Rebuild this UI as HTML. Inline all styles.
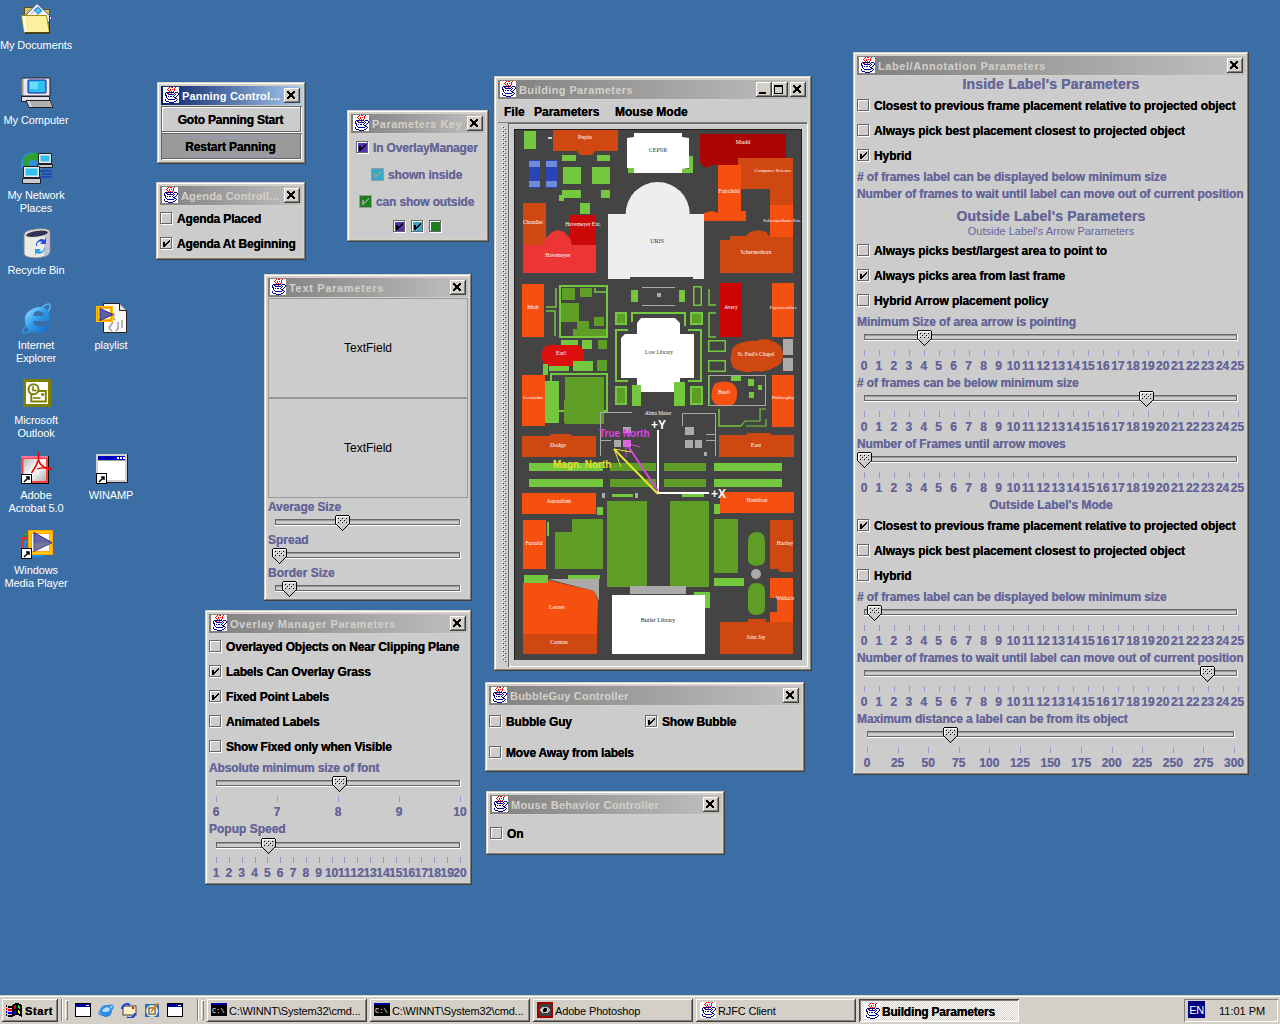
<!DOCTYPE html>
<html><head><meta charset="utf-8"><title>Desktop</title>
<style>
html,body{margin:0;padding:0;width:1280px;height:1024px;overflow:hidden;background:#3A6EA5;font-family:'Liberation Sans', sans-serif}
div{position:absolute;box-sizing:border-box}
svg{display:block}
</style></head><body>
<div style="left:21px;top:2px;width:32px;height:32px"><svg width="32" height="32" viewBox="0 0 32 32">
<path d="M3.5 5.5h8l2 2h15v8h-25z" fill="#D8C860" stroke="#605010" stroke-width="1"/>
<path d="M5 13L16 1.5L31 16L26 22z" fill="#F4F4FF" stroke="#5050A0" stroke-width="1"/>
<path d="M13 8l4-3 4 4-4 3z" fill="#40C8F8" stroke="#2060D0" stroke-width="0.7"/>
<path d="M10 12l8-7M13 15l8-7" stroke="#6060C0" stroke-width="0.6"/>
<path d="M0.5 13.5h25l3 17h-25z" fill="#FFF0A0" stroke="#A09000" stroke-width="1"/>
<path d="M1 14h3l2 16H3z" fill="#FFFFFF" opacity="0.7"/>
<path d="M4 31h25" stroke="#403000" stroke-width="1.5"/>
<path d="M28.5 14v17" stroke="#403000" stroke-width="1"/>
</svg></div><div style="left:-14px;top:39.70px;width:100px;text-align:center;font:normal 11px/11px 'Liberation Sans', sans-serif;color:#fff;white-space:pre;letter-spacing:-0.1px">My Documents</div><div style="left:21px;top:77px;width:32px;height:32px"><svg width="32" height="32" viewBox="0 0 32 32">
<path d="M2 1h26q1 0 1 1v17H1V2q0-1 1-1z" fill="#E8E8F4" stroke="#202020" stroke-width="1"/>
<path d="M1.5 2v16" stroke="#A0A080" stroke-width="2"/>
<rect x="7" y="3" width="18" height="13" rx="1" fill="#30C0F0" stroke="#1010A0" stroke-width="1"/>
<path d="M9 5h8v7H9z" fill="#90F0FF" opacity="0.6"/>
<path d="M0.5 19.5h28v5h-28z" fill="#E0E0EC" stroke="#202020" stroke-width="1"/>
<path d="M5 23.5h24l3 7H8z" fill="#D0D0E0" stroke="#202020" stroke-width="1"/>
<path d="M9 25h19M10 27h19M11 29h19" stroke="#808060" stroke-width="0.8"/>
</svg></div><div style="left:-14px;top:114.70px;width:100px;text-align:center;font:normal 11px/11px 'Liberation Sans', sans-serif;color:#fff;white-space:pre;letter-spacing:-0.1px">My Computer</div><div style="left:21px;top:152px;width:32px;height:32px"><svg width="32" height="32" viewBox="0 0 32 32">
<circle cx="11" cy="11.5" r="11" fill="#3090E0"/>
<path d="M2 7q5-7 13-6l4 4-3 4-6-1-3 3 2 4-4 1q-4-4-3-9z" fill="#30A030"/>
<path d="M13 15l5 2 2 4-3 3-3-3z" fill="#30A030"/>
<path d="M17.5 1.5h13v10h-13z" fill="#E8E8F4" stroke="#202020" stroke-width="1"/>
<path d="M19.5 3.5h9v6h-9z" fill="#30C0F0"/>
<path d="M16.5 12.5h15v3h-15z" fill="#C8C8D4" stroke="#202020" stroke-width="1"/>
<path d="M2.5 14.5h16v11h-16z" fill="#E8E8F4" stroke="#202020" stroke-width="1"/>
<path d="M4.5 16.5h12v7h-12z" fill="#30C0F0"/>
<path d="M1.5 26.5h18v5h-18z" fill="#C8C8D4" stroke="#202020" stroke-width="1"/>
<path d="M19 19h12M21 22h10M19 25h12" stroke="#1840C0" stroke-width="1.6"/>
</svg></div><div style="left:-14px;top:189.70px;width:100px;text-align:center;font:normal 11px/11px 'Liberation Sans', sans-serif;color:#fff;white-space:pre;letter-spacing:-0.1px">My Network</div><div style="left:-14px;top:202.70px;width:100px;text-align:center;font:normal 11px/11px 'Liberation Sans', sans-serif;color:#fff;white-space:pre;letter-spacing:-0.1px">Places</div><div style="left:21px;top:227px;width:32px;height:32px"><svg width="32" height="32" viewBox="0 0 32 32">
<path d="M3 8q0-5 13-6t13 3v20q-2 5-13 6q-12 0-13-4z" fill="#ECECE4" stroke="#808090" stroke-width="1"/>
<path d="M24 6h5v19q-2 5-6 5z" fill="#B8B8D0" opacity="0.8"/>
<ellipse cx="16" cy="6.5" rx="12.5" ry="4" transform="rotate(-8 16 6.5)" fill="#D8D8C0"/>
<ellipse cx="16" cy="6.8" rx="11" ry="2.8" transform="rotate(-8 16 6.8)" fill="#303058"/>
<path d="M15 19a6 6 0 0 1 9-6l1-3v7h-6l2-2a3.5 3.5 0 0 0-5 4z" fill="#2050E8"/>
<path d="M24 21a6 6 0 0 1-9 5l-1 3v-7h6l-2 2a3.5 3.5 0 0 0 5-4z" fill="#20A0F0"/>
</svg></div><div style="left:-14px;top:264.70px;width:100px;text-align:center;font:normal 11px/11px 'Liberation Sans', sans-serif;color:#fff;white-space:pre;letter-spacing:-0.1px">Recycle Bin</div><div style="left:21px;top:302px;width:32px;height:32px"><svg width="32" height="32" viewBox="0 0 32 32">
<defs><linearGradient id="ieg" x1="0" y1="0" x2="1" y2="1"><stop offset="0" stop-color="#A0E8FF"/><stop offset="0.45" stop-color="#30A0F0"/><stop offset="1" stop-color="#1060C0"/></linearGradient></defs>
<path d="M20 6q8-6 9-3t-3 8" fill="none" stroke="#50B0F0" stroke-width="1.6"/>
<path d="M6 22q-6 8-4 9t9-3" fill="none" stroke="#3090E0" stroke-width="1.6"/>
<path d="M17 5q12 0 12 12v2H12q1 6 7 6q5 0 7-3h3q-3 9-11 9q-12 0-14-11t13-15zM12 14h11q-1-5-5.5-5t-5.5 5z" fill="url(#ieg)"/>
</svg></div><div style="left:-14px;top:339.70px;width:100px;text-align:center;font:normal 11px/11px 'Liberation Sans', sans-serif;color:#fff;white-space:pre;letter-spacing:-0.1px">Internet</div><div style="left:-14px;top:352.70px;width:100px;text-align:center;font:normal 11px/11px 'Liberation Sans', sans-serif;color:#fff;white-space:pre;letter-spacing:-0.1px">Explorer</div><div style="left:96px;top:302px;width:32px;height:32px"><svg width="32" height="32" viewBox="0 0 32 32">
<path d="M7.5 1.5h16l7 7v22h-23z" fill="#F8F8F8" stroke="#202020" stroke-width="1"/>
<path d="M23.5 1.5v7h7" fill="#E0E0E0" stroke="#202020" stroke-width="1"/>
<path d="M15 10l3 2-1 4 2 2M22 20v7l-2 2M26 18v8M17 20l-4 6 3 3" stroke="#A0A0A0" stroke-width="1.5" fill="none"/>
<rect x="0" y="4" width="17" height="16" fill="#FFC000"/>
<rect x="1.5" y="5.5" width="14" height="13" fill="none" stroke="#FF9000" stroke-width="1"/>
<rect x="3" y="7" width="11" height="10" fill="#F8F8F8"/>
<path d="M4 6.5l13 6-13 6z" fill="#6060A8" stroke="#2828A0" stroke-width="1"/>
</svg></div><div style="left:61px;top:339.70px;width:100px;text-align:center;font:normal 11px/11px 'Liberation Sans', sans-serif;color:#fff;white-space:pre;letter-spacing:-0.1px">playlist</div><div style="left:21px;top:377px;width:32px;height:32px"><svg width="32" height="32" viewBox="0 0 32 32">
<rect x="2" y="2" width="28" height="28" fill="#808000"/>
<rect x="5" y="5" width="22" height="22" fill="#FFFFFF"/>
<path d="M10.3 14v10.5h14.5V14H18" fill="none" stroke="#808000" stroke-width="2"/>
<circle cx="12.5" cy="12.2" r="5" fill="#fff" stroke="#808000" stroke-width="2"/>
<path d="M12 9.3v4.2h3.6" fill="none" stroke="#808000" stroke-width="1.6"/>
<rect x="20.2" y="16.2" width="2.8" height="2.6" fill="#808000"/>
<path d="M12 21h7.5" stroke="#808000" stroke-width="1.6"/>
</svg></div><div style="left:-14px;top:414.70px;width:100px;text-align:center;font:normal 11px/11px 'Liberation Sans', sans-serif;color:#fff;white-space:pre;letter-spacing:-0.1px">Microsoft</div><div style="left:-14px;top:427.70px;width:100px;text-align:center;font:normal 11px/11px 'Liberation Sans', sans-serif;color:#fff;white-space:pre;letter-spacing:-0.1px">Outlook</div><div style="left:21px;top:452px;width:32px;height:32px"><svg width="32" height="32" viewBox="0 0 32 32">
<defs><linearGradient id="acg" x1="0" y1="0" x2="1" y2="1"><stop offset="0" stop-color="#B8B8B8"/><stop offset="0.5" stop-color="#FFFFFF"/><stop offset="1" stop-color="#B0B0B0"/></linearGradient></defs>
<rect x="0" y="4" width="28" height="28" fill="#000"/>
<rect x="0" y="4" width="27" height="27" fill="#FF4040"/>
<rect x="0" y="4" width="27" height="2" fill="#FF70A0"/>
<rect x="2.5" y="7" width="22.5" height="22" fill="url(#acg)"/>
<path d="M17.5 0v8q-2 6-7 13" fill="none" stroke="#F00000" stroke-width="1.6"/>
<path d="M17.5 8q2 7 10 8.5h4" fill="none" stroke="#F00000" stroke-width="1.6"/>
<path d="M16 17q6-2 12-0.5" fill="none" stroke="#F00000" stroke-width="1.2"/>
<path d="M27 15l4 1.5-4 2z" fill="#E00000"/>
<rect x="0.5" y="22.5" width="10" height="9" fill="#fff" stroke="#000" stroke-width="1"/>
<path d="M3 30l5-5M5 25h3v3" stroke="#000" stroke-width="1.5" fill="none"/>
</svg></div><div style="left:-14px;top:489.70px;width:100px;text-align:center;font:normal 11px/11px 'Liberation Sans', sans-serif;color:#fff;white-space:pre;letter-spacing:-0.1px">Adobe</div><div style="left:-14px;top:502.70px;width:100px;text-align:center;font:normal 11px/11px 'Liberation Sans', sans-serif;color:#fff;white-space:pre;letter-spacing:-0.1px">Acrobat 5.0</div><div style="left:96px;top:452px;width:32px;height:32px"><svg width="32" height="32" viewBox="0 0 32 32" shape-rendering="crispEdges">
<rect x="0" y="2" width="32" height="29" fill="#202020"/>
<rect x="0" y="2" width="31" height="28" fill="#D0D0D0"/>
<rect x="2" y="4" width="27" height="24" fill="#A0A0A0"/>
<rect x="2" y="4" width="27" height="4" fill="#0000C0"/>
<rect x="2" y="9" width="27" height="19" fill="#FFFFFF"/>
<rect x="21" y="5" width="2" height="2" fill="#fff"/><rect x="24" y="5" width="2" height="2" fill="#fff"/><rect x="27" y="5" width="2" height="2" fill="#fff"/>
<rect x="0.5" y="21.5" width="10" height="10" fill="#fff" stroke="#000" stroke-width="1"/>
<path d="M3 30l5-5M5 25h3v3" stroke="#000" stroke-width="1.5" fill="none" shape-rendering="auto"/>
</svg></div><div style="left:61px;top:489.70px;width:100px;text-align:center;font:normal 11px/11px 'Liberation Sans', sans-serif;color:#fff;white-space:pre;letter-spacing:-0.1px">WINAMP</div><div style="left:21px;top:527px;width:32px;height:32px"><svg width="32" height="32" viewBox="0 0 32 32">
<g transform="translate(0,-1)">
<path d="M1 23V12h5" fill="none" stroke="#F03010" stroke-width="2"/>
<path d="M3 10V8h4" fill="none" stroke="#20A020" stroke-width="2"/>
<path d="M4 23V16h3" fill="none" stroke="#1890F0" stroke-width="2"/>
<path d="M11 30h11" fill="none" stroke="#1890F0" stroke-width="2"/>
<rect x="7.5" y="4.5" width="24" height="24" fill="#FFC800" stroke="#FFA000" stroke-width="1"/>
<rect x="10" y="7" width="19" height="19" fill="#FFA020"/>
<rect x="11" y="8" width="17" height="17" fill="#FFFFFF"/>
<path d="M13 6.5L31 16.7L13 25.3z" fill="#6464A8" stroke="#282890" stroke-width="1"/>
<path d="M13 17L31 16.7L13 25.3z" fill="#808090" opacity="0.6"/>
</g>
<rect x="0.5" y="21.5" width="10" height="10" fill="#fff" stroke="#000" stroke-width="1"/>
<path d="M3 30l5-5M5 25h3v3" stroke="#000" stroke-width="1.5" fill="none"/>
</svg></div><div style="left:-14px;top:564.70px;width:100px;text-align:center;font:normal 11px/11px 'Liberation Sans', sans-serif;color:#fff;white-space:pre;letter-spacing:-0.1px">Windows</div><div style="left:-14px;top:577.70px;width:100px;text-align:center;font:normal 11px/11px 'Liberation Sans', sans-serif;color:#fff;white-space:pre;letter-spacing:-0.1px">Media Player</div><div style="left:157px;top:82px;width:149px;height:82px;background:#D4D0C8;box-shadow:inset -1px -1px #404040,inset 1px 1px #D4D0C8,inset -2px -2px #808080,inset 2px 2px #fff;"></div><div style="left:161px;top:86px;width:141px;height:19px;background:linear-gradient(to right,#0A246A,#A6CAF0)"></div><div style="left:163px;top:87px;width:16px;height:16px"><svg width="16" height="16" viewBox="0 0 16 16" shape-rendering="crispEdges"><rect width="16" height="16" fill="#fff"/><path d="M6 0h1v1h-1zM8 0h1v1h-1zM9 0h1v1h-1zM12 0h1v1h-1zM5 1h1v1h-1zM11 1h1v1h-1zM4 2h1v1h-1zM7 2h1v1h-1zM9 2h1v1h-1zM11 2h1v1h-1zM5 3h1v1h-1zM7 3h1v1h-1zM11 3h1v1h-1zM6 4h1v1h-1zM8 4h1v1h-1zM10 4h1v1h-1zM5 6h1v1h-1zM8 6h1v1h-1z" fill="#f00"/><path d="M3 5h1v1h-1zM4 5h1v1h-1zM5 5h1v1h-1zM6 5h1v1h-1zM7 5h1v1h-1zM8 5h1v1h-1zM9 5h1v1h-1zM10 5h1v1h-1zM12 5h1v1h-1zM13 5h1v1h-1zM14 5h1v1h-1zM2 6h1v1h-1zM4 6h1v1h-1zM11 6h1v1h-1zM15 6h1v1h-1zM2 7h1v1h-1zM5 7h1v1h-1zM6 7h1v1h-1zM7 7h1v1h-1zM8 7h1v1h-1zM9 7h1v1h-1zM10 7h1v1h-1zM12 7h1v1h-1zM15 7h1v1h-1zM2 8h1v1h-1zM3 8h1v1h-1zM11 8h1v1h-1zM14 8h1v1h-1zM3 9h1v1h-1zM5 9h1v1h-1zM7 9h1v1h-1zM8 9h1v1h-1zM10 9h1v1h-1zM13 9h1v1h-1zM3 10h1v1h-1zM11 10h1v1h-1zM12 10h1v1h-1zM4 11h1v1h-1zM12 11h1v1h-1zM13 11h1v1h-1zM2 12h1v1h-1zM5 12h1v1h-1zM6 12h1v1h-1zM7 12h1v1h-1zM8 12h1v1h-1zM9 12h1v1h-1zM10 12h1v1h-1zM11 12h1v1h-1zM14 12h1v1h-1zM2 13h1v1h-1zM13 13h1v1h-1zM3 14h1v1h-1zM4 14h1v1h-1zM5 14h1v1h-1zM11 14h1v1h-1zM12 14h1v1h-1zM6 15h1v1h-1zM7 15h1v1h-1zM8 15h1v1h-1zM9 15h1v1h-1zM10 15h1v1h-1z" fill="#00008B"/></svg></div><div style="left:182px;top:90.69px;height:11px;font:bold 11px/11px 'Liberation Sans', sans-serif;color:#fff;white-space:pre;letter-spacing:0.18px">Panning Control...</div><div style="left:284px;top:88px;width:16px;height:15px;background:#D4D0C8;box-shadow:inset -1px -1px #404040,inset 1px 1px #fff,inset -2px -2px #808080;"><svg style="position:absolute;left:3px;top:3px" width="8" height="8" shape-rendering="crispEdges"><path d="M0 0h1v1h-1zM1 0h1v1h-1zM6 0h1v1h-1zM7 0h1v1h-1zM0 1h1v1h-1zM1 1h1v1h-1zM2 1h1v1h-1zM5 1h1v1h-1zM6 1h1v1h-1zM7 1h1v1h-1zM1 2h1v1h-1zM2 2h1v1h-1zM3 2h1v1h-1zM4 2h1v1h-1zM5 2h1v1h-1zM6 2h1v1h-1zM2 3h1v1h-1zM3 3h1v1h-1zM4 3h1v1h-1zM5 3h1v1h-1zM2 4h1v1h-1zM3 4h1v1h-1zM4 4h1v1h-1zM5 4h1v1h-1zM1 5h1v1h-1zM2 5h1v1h-1zM3 5h1v1h-1zM4 5h1v1h-1zM5 5h1v1h-1zM6 5h1v1h-1zM0 6h1v1h-1zM1 6h1v1h-1zM2 6h1v1h-1zM5 6h1v1h-1zM6 6h1v1h-1zM7 6h1v1h-1zM0 7h1v1h-1zM1 7h1v1h-1zM6 7h1v1h-1zM7 7h1v1h-1z" fill="#000"/></svg></div><div style="left:161px;top:106px;width:141px;height:54px;background:#CCCCCC"></div><div style="left:161px;top:106px;width:141px;height:27px;background:#CCCCCC;box-shadow:inset 1px 1px #666,inset -1px -1px #fff,inset -2px -2px #666,inset 2px 2px #fff"></div><div style="left:160px;top:113.84px;width:141px;text-align:center;font:bold 12px/12px 'Liberation Sans', sans-serif;color:#000;white-space:pre;text-shadow:0 0 0.3px;letter-spacing:-0.2px">Goto Panning Start</div><div style="left:161px;top:133px;width:141px;height:27px;background:#999999;box-shadow:inset 1px 1px #666,inset -1px -1px #fff,inset -2px -2px #666"></div><div style="left:185px;top:137px;width:93px;height:19px;box-sizing:border-box;border:1px solid #9999CC"></div><div style="left:160px;top:140.84px;width:141px;text-align:center;font:bold 12px/12px 'Liberation Sans', sans-serif;color:#000;white-space:pre;text-shadow:0 0 0.3px;letter-spacing:-0.1px">Restart Panning</div><div style="left:156px;top:182px;width:150px;height:78px;background:#D4D0C8;box-shadow:inset -1px -1px #404040,inset 1px 1px #D4D0C8,inset -2px -2px #808080,inset 2px 2px #fff;"></div><div style="left:160px;top:186px;width:142px;height:19px;background:linear-gradient(to right,#808080,#C0C0C0)"></div><div style="left:162px;top:187px;width:16px;height:16px"><svg width="16" height="16" viewBox="0 0 16 16" shape-rendering="crispEdges"><rect width="16" height="16" fill="#fff"/><path d="M6 0h1v1h-1zM8 0h1v1h-1zM9 0h1v1h-1zM12 0h1v1h-1zM5 1h1v1h-1zM11 1h1v1h-1zM4 2h1v1h-1zM7 2h1v1h-1zM9 2h1v1h-1zM11 2h1v1h-1zM5 3h1v1h-1zM7 3h1v1h-1zM11 3h1v1h-1zM6 4h1v1h-1zM8 4h1v1h-1zM10 4h1v1h-1zM5 6h1v1h-1zM8 6h1v1h-1z" fill="#f00"/><path d="M3 5h1v1h-1zM4 5h1v1h-1zM5 5h1v1h-1zM6 5h1v1h-1zM7 5h1v1h-1zM8 5h1v1h-1zM9 5h1v1h-1zM10 5h1v1h-1zM12 5h1v1h-1zM13 5h1v1h-1zM14 5h1v1h-1zM2 6h1v1h-1zM4 6h1v1h-1zM11 6h1v1h-1zM15 6h1v1h-1zM2 7h1v1h-1zM5 7h1v1h-1zM6 7h1v1h-1zM7 7h1v1h-1zM8 7h1v1h-1zM9 7h1v1h-1zM10 7h1v1h-1zM12 7h1v1h-1zM15 7h1v1h-1zM2 8h1v1h-1zM3 8h1v1h-1zM11 8h1v1h-1zM14 8h1v1h-1zM3 9h1v1h-1zM5 9h1v1h-1zM7 9h1v1h-1zM8 9h1v1h-1zM10 9h1v1h-1zM13 9h1v1h-1zM3 10h1v1h-1zM11 10h1v1h-1zM12 10h1v1h-1zM4 11h1v1h-1zM12 11h1v1h-1zM13 11h1v1h-1zM2 12h1v1h-1zM5 12h1v1h-1zM6 12h1v1h-1zM7 12h1v1h-1zM8 12h1v1h-1zM9 12h1v1h-1zM10 12h1v1h-1zM11 12h1v1h-1zM14 12h1v1h-1zM2 13h1v1h-1zM13 13h1v1h-1zM3 14h1v1h-1zM4 14h1v1h-1zM5 14h1v1h-1zM11 14h1v1h-1zM12 14h1v1h-1zM6 15h1v1h-1zM7 15h1v1h-1zM8 15h1v1h-1zM9 15h1v1h-1zM10 15h1v1h-1z" fill="#00008B"/></svg></div><div style="left:181px;top:190.69px;height:11px;font:bold 11px/11px 'Liberation Sans', sans-serif;color:#D4D0C8;white-space:pre;letter-spacing:0.18px">Agenda Controll...</div><div style="left:284px;top:188px;width:16px;height:15px;background:#D4D0C8;box-shadow:inset -1px -1px #404040,inset 1px 1px #fff,inset -2px -2px #808080;"><svg style="position:absolute;left:3px;top:3px" width="8" height="8" shape-rendering="crispEdges"><path d="M0 0h1v1h-1zM1 0h1v1h-1zM6 0h1v1h-1zM7 0h1v1h-1zM0 1h1v1h-1zM1 1h1v1h-1zM2 1h1v1h-1zM5 1h1v1h-1zM6 1h1v1h-1zM7 1h1v1h-1zM1 2h1v1h-1zM2 2h1v1h-1zM3 2h1v1h-1zM4 2h1v1h-1zM5 2h1v1h-1zM6 2h1v1h-1zM2 3h1v1h-1zM3 3h1v1h-1zM4 3h1v1h-1zM5 3h1v1h-1zM2 4h1v1h-1zM3 4h1v1h-1zM4 4h1v1h-1zM5 4h1v1h-1zM1 5h1v1h-1zM2 5h1v1h-1zM3 5h1v1h-1zM4 5h1v1h-1zM5 5h1v1h-1zM6 5h1v1h-1zM0 6h1v1h-1zM1 6h1v1h-1zM2 6h1v1h-1zM5 6h1v1h-1zM6 6h1v1h-1zM7 6h1v1h-1zM0 7h1v1h-1zM1 7h1v1h-1zM6 7h1v1h-1zM7 7h1v1h-1z" fill="#000"/></svg></div><div style="left:160px;top:206px;width:142px;height:50px;background:#CCCCCC"></div><div style="left:160px;top:212px;width:13px;height:13px;"><div style="left:1px;top:1px;width:12px;height:12px;border:1px solid #fff"></div><div style="left:0;top:0;width:12px;height:12px;border:1px solid #666"></div></div><div style="left:177px;top:212.84px;font:bold 12px/12px 'Liberation Sans', sans-serif;color:#000;white-space:pre;text-shadow:0 0 0.3px;letter-spacing:-0.15px">Agenda Placed</div><div style="left:160px;top:237px;width:13px;height:13px;"><div style="left:1px;top:1px;width:12px;height:12px;border:1px solid #fff"></div><div style="left:0;top:0;width:12px;height:12px;border:1px solid #666"></div><svg style="position:absolute;left:0;top:0" width="13" height="13" shape-rendering="crispEdges"><path d="M3 5h2v5H3zM9 3h1v2H9zM8 4h1v2H8zM7 5h1v2H7zM6 6h1v2H6zM5 7h1v2H5z" fill="#000"/></svg></div><div style="left:177px;top:237.84px;font:bold 12px/12px 'Liberation Sans', sans-serif;color:#000;white-space:pre;text-shadow:0 0 0.3px;letter-spacing:-0.15px">Agenda At Beginning</div><div style="left:347px;top:110px;width:142px;height:132px;background:#D4D0C8;box-shadow:inset -1px -1px #404040,inset 1px 1px #D4D0C8,inset -2px -2px #808080,inset 2px 2px #fff;"></div><div style="left:351px;top:114px;width:134px;height:19px;background:linear-gradient(to right,#808080,#C0C0C0)"></div><div style="left:353px;top:115px;width:16px;height:16px"><svg width="16" height="16" viewBox="0 0 16 16" shape-rendering="crispEdges"><rect width="16" height="16" fill="#fff"/><path d="M6 0h1v1h-1zM8 0h1v1h-1zM9 0h1v1h-1zM12 0h1v1h-1zM5 1h1v1h-1zM11 1h1v1h-1zM4 2h1v1h-1zM7 2h1v1h-1zM9 2h1v1h-1zM11 2h1v1h-1zM5 3h1v1h-1zM7 3h1v1h-1zM11 3h1v1h-1zM6 4h1v1h-1zM8 4h1v1h-1zM10 4h1v1h-1zM5 6h1v1h-1zM8 6h1v1h-1z" fill="#f00"/><path d="M3 5h1v1h-1zM4 5h1v1h-1zM5 5h1v1h-1zM6 5h1v1h-1zM7 5h1v1h-1zM8 5h1v1h-1zM9 5h1v1h-1zM10 5h1v1h-1zM12 5h1v1h-1zM13 5h1v1h-1zM14 5h1v1h-1zM2 6h1v1h-1zM4 6h1v1h-1zM11 6h1v1h-1zM15 6h1v1h-1zM2 7h1v1h-1zM5 7h1v1h-1zM6 7h1v1h-1zM7 7h1v1h-1zM8 7h1v1h-1zM9 7h1v1h-1zM10 7h1v1h-1zM12 7h1v1h-1zM15 7h1v1h-1zM2 8h1v1h-1zM3 8h1v1h-1zM11 8h1v1h-1zM14 8h1v1h-1zM3 9h1v1h-1zM5 9h1v1h-1zM7 9h1v1h-1zM8 9h1v1h-1zM10 9h1v1h-1zM13 9h1v1h-1zM3 10h1v1h-1zM11 10h1v1h-1zM12 10h1v1h-1zM4 11h1v1h-1zM12 11h1v1h-1zM13 11h1v1h-1zM2 12h1v1h-1zM5 12h1v1h-1zM6 12h1v1h-1zM7 12h1v1h-1zM8 12h1v1h-1zM9 12h1v1h-1zM10 12h1v1h-1zM11 12h1v1h-1zM14 12h1v1h-1zM2 13h1v1h-1zM13 13h1v1h-1zM3 14h1v1h-1zM4 14h1v1h-1zM5 14h1v1h-1zM11 14h1v1h-1zM12 14h1v1h-1zM6 15h1v1h-1zM7 15h1v1h-1zM8 15h1v1h-1zM9 15h1v1h-1zM10 15h1v1h-1z" fill="#00008B"/></svg></div><div style="left:372px;top:118.69px;height:11px;font:bold 11px/11px 'Liberation Sans', sans-serif;color:#D4D0C8;white-space:pre;letter-spacing:0.49px">Parameters Key</div><div style="left:467px;top:116px;width:16px;height:15px;background:#D4D0C8;box-shadow:inset -1px -1px #404040,inset 1px 1px #fff,inset -2px -2px #808080;"><svg style="position:absolute;left:3px;top:3px" width="8" height="8" shape-rendering="crispEdges"><path d="M0 0h1v1h-1zM1 0h1v1h-1zM6 0h1v1h-1zM7 0h1v1h-1zM0 1h1v1h-1zM1 1h1v1h-1zM2 1h1v1h-1zM5 1h1v1h-1zM6 1h1v1h-1zM7 1h1v1h-1zM1 2h1v1h-1zM2 2h1v1h-1zM3 2h1v1h-1zM4 2h1v1h-1zM5 2h1v1h-1zM6 2h1v1h-1zM2 3h1v1h-1zM3 3h1v1h-1zM4 3h1v1h-1zM5 3h1v1h-1zM2 4h1v1h-1zM3 4h1v1h-1zM4 4h1v1h-1zM5 4h1v1h-1zM1 5h1v1h-1zM2 5h1v1h-1zM3 5h1v1h-1zM4 5h1v1h-1zM5 5h1v1h-1zM6 5h1v1h-1zM0 6h1v1h-1zM1 6h1v1h-1zM2 6h1v1h-1zM5 6h1v1h-1zM6 6h1v1h-1zM7 6h1v1h-1zM0 7h1v1h-1zM1 7h1v1h-1zM6 7h1v1h-1zM7 7h1v1h-1z" fill="#000"/></svg></div><div style="left:351px;top:134px;width:134px;height:104px;background:#CCCCCC"></div><div style="left:356px;top:141px;width:13px;height:13px;"><div style="left:1px;top:1px;width:11px;height:11px;background:#5533AA"></div><div style="left:1px;top:1px;width:12px;height:12px;border:1px solid #fff"></div><div style="left:0;top:0;width:12px;height:12px;border:1px solid #666"></div><svg style="position:absolute;left:0;top:0" width="13" height="13" shape-rendering="crispEdges"><path d="M3 5h2v5H3zM9 3h1v2H9zM8 4h1v2H8zM7 5h1v2H7zM6 6h1v2H6zM5 7h1v2H5z" fill="#000"/></svg></div><div style="left:373px;top:141.84px;font:bold 12px/12px 'Liberation Sans', sans-serif;color:#666699;white-space:pre;text-shadow:0 0 0.3px;letter-spacing:-0.15px">In OverlayManager</div><div style="left:371px;top:168px;width:13px;height:13px;"><div style="left:1px;top:1px;width:11px;height:11px;background:#33AACC"></div><div style="left:0;top:0;width:13px;height:13px;border:1px solid #999"></div><svg style="position:absolute;left:0;top:0" width="13" height="13" shape-rendering="crispEdges"><path d="M3 5h2v5H3zM9 3h1v2H9zM8 4h1v2H8zM7 5h1v2H7zM6 6h1v2H6zM5 7h1v2H5z" fill="#999"/></svg></div><div style="left:388px;top:168.84px;font:bold 12px/12px 'Liberation Sans', sans-serif;color:#666699;white-space:pre;text-shadow:0 0 0.3px;letter-spacing:-0.15px">shown inside</div><div style="left:359px;top:195px;width:13px;height:13px;"><div style="left:1px;top:1px;width:11px;height:11px;background:#1E7F1E"></div><div style="left:0;top:0;width:13px;height:13px;border:1px solid #999"></div><svg style="position:absolute;left:0;top:0" width="13" height="13" shape-rendering="crispEdges"><path d="M3 5h2v5H3zM9 3h1v2H9zM8 4h1v2H8zM7 5h1v2H7zM6 6h1v2H6zM5 7h1v2H5z" fill="#999"/></svg></div><div style="left:376px;top:195.84px;font:bold 12px/12px 'Liberation Sans', sans-serif;color:#666699;white-space:pre;text-shadow:0 0 0.3px;letter-spacing:-0.15px">can show outside</div><div style="left:393px;top:220px;width:13px;height:13px;"><div style="left:1px;top:1px;width:11px;height:11px;background:#5533AA"></div><div style="left:1px;top:1px;width:12px;height:12px;border:1px solid #fff"></div><div style="left:0;top:0;width:12px;height:12px;border:1px solid #666"></div><svg style="position:absolute;left:0;top:0" width="13" height="13" shape-rendering="crispEdges"><path d="M3 5h2v5H3zM9 3h1v2H9zM8 4h1v2H8zM7 5h1v2H7zM6 6h1v2H6zM5 7h1v2H5z" fill="#000"/></svg></div><div style="left:411px;top:220px;width:13px;height:13px;"><div style="left:1px;top:1px;width:11px;height:11px;background:#33AACC"></div><div style="left:1px;top:1px;width:12px;height:12px;border:1px solid #fff"></div><div style="left:0;top:0;width:12px;height:12px;border:1px solid #666"></div><svg style="position:absolute;left:0;top:0" width="13" height="13" shape-rendering="crispEdges"><path d="M3 5h2v5H3zM9 3h1v2H9zM8 4h1v2H8zM7 5h1v2H7zM6 6h1v2H6zM5 7h1v2H5z" fill="#000"/></svg></div><div style="left:429px;top:220px;width:13px;height:13px;"><div style="left:1px;top:1px;width:11px;height:11px;background:#1E7F1E"></div><div style="left:1px;top:1px;width:12px;height:12px;border:1px solid #fff"></div><div style="left:0;top:0;width:12px;height:12px;border:1px solid #666"></div></div><div style="left:264px;top:274px;width:208px;height:327px;background:#D4D0C8;box-shadow:inset -1px -1px #404040,inset 1px 1px #D4D0C8,inset -2px -2px #808080,inset 2px 2px #fff;"></div><div style="left:268px;top:278px;width:200px;height:19px;background:linear-gradient(to right,#808080,#C0C0C0)"></div><div style="left:270px;top:279px;width:16px;height:16px"><svg width="16" height="16" viewBox="0 0 16 16" shape-rendering="crispEdges"><rect width="16" height="16" fill="#fff"/><path d="M6 0h1v1h-1zM8 0h1v1h-1zM9 0h1v1h-1zM12 0h1v1h-1zM5 1h1v1h-1zM11 1h1v1h-1zM4 2h1v1h-1zM7 2h1v1h-1zM9 2h1v1h-1zM11 2h1v1h-1zM5 3h1v1h-1zM7 3h1v1h-1zM11 3h1v1h-1zM6 4h1v1h-1zM8 4h1v1h-1zM10 4h1v1h-1zM5 6h1v1h-1zM8 6h1v1h-1z" fill="#f00"/><path d="M3 5h1v1h-1zM4 5h1v1h-1zM5 5h1v1h-1zM6 5h1v1h-1zM7 5h1v1h-1zM8 5h1v1h-1zM9 5h1v1h-1zM10 5h1v1h-1zM12 5h1v1h-1zM13 5h1v1h-1zM14 5h1v1h-1zM2 6h1v1h-1zM4 6h1v1h-1zM11 6h1v1h-1zM15 6h1v1h-1zM2 7h1v1h-1zM5 7h1v1h-1zM6 7h1v1h-1zM7 7h1v1h-1zM8 7h1v1h-1zM9 7h1v1h-1zM10 7h1v1h-1zM12 7h1v1h-1zM15 7h1v1h-1zM2 8h1v1h-1zM3 8h1v1h-1zM11 8h1v1h-1zM14 8h1v1h-1zM3 9h1v1h-1zM5 9h1v1h-1zM7 9h1v1h-1zM8 9h1v1h-1zM10 9h1v1h-1zM13 9h1v1h-1zM3 10h1v1h-1zM11 10h1v1h-1zM12 10h1v1h-1zM4 11h1v1h-1zM12 11h1v1h-1zM13 11h1v1h-1zM2 12h1v1h-1zM5 12h1v1h-1zM6 12h1v1h-1zM7 12h1v1h-1zM8 12h1v1h-1zM9 12h1v1h-1zM10 12h1v1h-1zM11 12h1v1h-1zM14 12h1v1h-1zM2 13h1v1h-1zM13 13h1v1h-1zM3 14h1v1h-1zM4 14h1v1h-1zM5 14h1v1h-1zM11 14h1v1h-1zM12 14h1v1h-1zM6 15h1v1h-1zM7 15h1v1h-1zM8 15h1v1h-1zM9 15h1v1h-1zM10 15h1v1h-1z" fill="#00008B"/></svg></div><div style="left:289px;top:282.69px;height:11px;font:bold 11px/11px 'Liberation Sans', sans-serif;color:#D4D0C8;white-space:pre;letter-spacing:0.68px">Text Parameters</div><div style="left:450px;top:280px;width:16px;height:15px;background:#D4D0C8;box-shadow:inset -1px -1px #404040,inset 1px 1px #fff,inset -2px -2px #808080;"><svg style="position:absolute;left:3px;top:3px" width="8" height="8" shape-rendering="crispEdges"><path d="M0 0h1v1h-1zM1 0h1v1h-1zM6 0h1v1h-1zM7 0h1v1h-1zM0 1h1v1h-1zM1 1h1v1h-1zM2 1h1v1h-1zM5 1h1v1h-1zM6 1h1v1h-1zM7 1h1v1h-1zM1 2h1v1h-1zM2 2h1v1h-1zM3 2h1v1h-1zM4 2h1v1h-1zM5 2h1v1h-1zM6 2h1v1h-1zM2 3h1v1h-1zM3 3h1v1h-1zM4 3h1v1h-1zM5 3h1v1h-1zM2 4h1v1h-1zM3 4h1v1h-1zM4 4h1v1h-1zM5 4h1v1h-1zM1 5h1v1h-1zM2 5h1v1h-1zM3 5h1v1h-1zM4 5h1v1h-1zM5 5h1v1h-1zM6 5h1v1h-1zM0 6h1v1h-1zM1 6h1v1h-1zM2 6h1v1h-1zM5 6h1v1h-1zM6 6h1v1h-1zM7 6h1v1h-1zM0 7h1v1h-1zM1 7h1v1h-1zM6 7h1v1h-1zM7 7h1v1h-1z" fill="#000"/></svg></div><div style="left:268px;top:298px;width:200px;height:299px;background:#CCCCCC"></div><div style="left:268px;top:298px;width:200px;height:101px;box-sizing:border-box;border:1px solid #999;border-bottom:2px solid #999"></div><div style="left:268px;top:341.84px;width:200px;text-align:center;font:normal 12px/12px 'Liberation Sans', sans-serif;color:#000;white-space:pre;">TextField</div><div style="left:268px;top:398px;width:200px;height:100px;box-sizing:border-box;border:1px solid #999"></div><div style="left:268px;top:441.84px;width:200px;text-align:center;font:normal 12px/12px 'Liberation Sans', sans-serif;color:#000;white-space:pre;">TextField</div><div style="left:268px;top:500.84px;font:bold 12px/12px 'Liberation Sans', sans-serif;color:#666699;white-space:pre;text-shadow:0 0 0.3px;letter-spacing:-0.1px">Average Size</div><div style="left:275px;top:519px;width:186px;height:7px;background:#fff"></div><div style="left:275px;top:519px;width:185px;height:6px;background:#CCCCCC;border:1px solid #666;box-shadow:inset 0 1px #999"></div><div style="left:335px;top:515px;width:15px;height:16px"><svg width="15" height="16" shape-rendering="crispEdges"><path d="M1 1h13v8l-7 7l-7-7z" fill="#CCCCCC"/>
<path d="M1 1h13v1H1zM1 1h1v8H1z" fill="#fff"/>
<path d="M1 0h13v1H1zM0 1h1v8H0zM14 1h1v8h-1zM1 9h1v1H1zM2 10h1v1H2zM3 11h1v1H3zM4 12h1v1H4zM5 13h1v1H5zM6 14h1v1H6zM7 15h1v1H7zM13 9h1v1h-1zM12 10h1v1h-1zM11 11h1v1h-1zM10 12h1v1h-1zM9 13h1v1H9zM8 14h1v1H8z" fill="#000"/>
<path d="M2 2h1v1H2zM6 2h1v1H6zM10 2h1v1h-1zM4 4h1v1H4zM8 4h1v1H8zM2 6h1v1H2zM6 6h1v1H6zM10 6h1v1h-1z" fill="#fff"/>
<path d="M3 3h1v1H3zM7 3h1v1H7zM11 3h1v1h-1zM5 5h1v1H5zM9 5h1v1H9zM3 7h1v1H3zM7 7h1v1H7zM11 7h1v1h-1z" fill="#000"/></svg></div><div style="left:268px;top:533.84px;font:bold 12px/12px 'Liberation Sans', sans-serif;color:#666699;white-space:pre;text-shadow:0 0 0.3px;">Spread</div><div style="left:275px;top:552px;width:186px;height:7px;background:#fff"></div><div style="left:275px;top:552px;width:185px;height:6px;background:#CCCCCC;border:1px solid #666;box-shadow:inset 0 1px #999"></div><div style="left:272px;top:548px;width:15px;height:16px"><svg width="15" height="16" shape-rendering="crispEdges"><path d="M1 1h13v8l-7 7l-7-7z" fill="#CCCCCC"/>
<path d="M1 1h13v1H1zM1 1h1v8H1z" fill="#fff"/>
<path d="M1 0h13v1H1zM0 1h1v8H0zM14 1h1v8h-1zM1 9h1v1H1zM2 10h1v1H2zM3 11h1v1H3zM4 12h1v1H4zM5 13h1v1H5zM6 14h1v1H6zM7 15h1v1H7zM13 9h1v1h-1zM12 10h1v1h-1zM11 11h1v1h-1zM10 12h1v1h-1zM9 13h1v1H9zM8 14h1v1H8z" fill="#000"/>
<path d="M2 2h1v1H2zM6 2h1v1H6zM10 2h1v1h-1zM4 4h1v1H4zM8 4h1v1H8zM2 6h1v1H2zM6 6h1v1H6zM10 6h1v1h-1z" fill="#fff"/>
<path d="M3 3h1v1H3zM7 3h1v1H7zM11 3h1v1h-1zM5 5h1v1H5zM9 5h1v1H9zM3 7h1v1H3zM7 7h1v1H7zM11 7h1v1h-1z" fill="#000"/></svg></div><div style="left:268px;top:566.84px;font:bold 12px/12px 'Liberation Sans', sans-serif;color:#666699;white-space:pre;text-shadow:0 0 0.3px;">Border Size</div><div style="left:275px;top:585px;width:186px;height:7px;background:#fff"></div><div style="left:275px;top:585px;width:185px;height:6px;background:#CCCCCC;border:1px solid #666;box-shadow:inset 0 1px #999"></div><div style="left:282px;top:581px;width:15px;height:16px"><svg width="15" height="16" shape-rendering="crispEdges"><path d="M1 1h13v8l-7 7l-7-7z" fill="#CCCCCC"/>
<path d="M1 1h13v1H1zM1 1h1v8H1z" fill="#fff"/>
<path d="M1 0h13v1H1zM0 1h1v8H0zM14 1h1v8h-1zM1 9h1v1H1zM2 10h1v1H2zM3 11h1v1H3zM4 12h1v1H4zM5 13h1v1H5zM6 14h1v1H6zM7 15h1v1H7zM13 9h1v1h-1zM12 10h1v1h-1zM11 11h1v1h-1zM10 12h1v1h-1zM9 13h1v1H9zM8 14h1v1H8z" fill="#000"/>
<path d="M2 2h1v1H2zM6 2h1v1H6zM10 2h1v1h-1zM4 4h1v1H4zM8 4h1v1H8zM2 6h1v1H2zM6 6h1v1H6zM10 6h1v1h-1z" fill="#fff"/>
<path d="M3 3h1v1H3zM7 3h1v1H7zM11 3h1v1h-1zM5 5h1v1H5zM9 5h1v1H9zM3 7h1v1H3zM7 7h1v1H7zM11 7h1v1h-1z" fill="#000"/></svg></div><div style="left:205px;top:610px;width:267px;height:275px;background:#D4D0C8;box-shadow:inset -1px -1px #404040,inset 1px 1px #D4D0C8,inset -2px -2px #808080,inset 2px 2px #fff;"></div><div style="left:209px;top:614px;width:259px;height:19px;background:linear-gradient(to right,#808080,#C0C0C0)"></div><div style="left:211px;top:615px;width:16px;height:16px"><svg width="16" height="16" viewBox="0 0 16 16" shape-rendering="crispEdges"><rect width="16" height="16" fill="#fff"/><path d="M6 0h1v1h-1zM8 0h1v1h-1zM9 0h1v1h-1zM12 0h1v1h-1zM5 1h1v1h-1zM11 1h1v1h-1zM4 2h1v1h-1zM7 2h1v1h-1zM9 2h1v1h-1zM11 2h1v1h-1zM5 3h1v1h-1zM7 3h1v1h-1zM11 3h1v1h-1zM6 4h1v1h-1zM8 4h1v1h-1zM10 4h1v1h-1zM5 6h1v1h-1zM8 6h1v1h-1z" fill="#f00"/><path d="M3 5h1v1h-1zM4 5h1v1h-1zM5 5h1v1h-1zM6 5h1v1h-1zM7 5h1v1h-1zM8 5h1v1h-1zM9 5h1v1h-1zM10 5h1v1h-1zM12 5h1v1h-1zM13 5h1v1h-1zM14 5h1v1h-1zM2 6h1v1h-1zM4 6h1v1h-1zM11 6h1v1h-1zM15 6h1v1h-1zM2 7h1v1h-1zM5 7h1v1h-1zM6 7h1v1h-1zM7 7h1v1h-1zM8 7h1v1h-1zM9 7h1v1h-1zM10 7h1v1h-1zM12 7h1v1h-1zM15 7h1v1h-1zM2 8h1v1h-1zM3 8h1v1h-1zM11 8h1v1h-1zM14 8h1v1h-1zM3 9h1v1h-1zM5 9h1v1h-1zM7 9h1v1h-1zM8 9h1v1h-1zM10 9h1v1h-1zM13 9h1v1h-1zM3 10h1v1h-1zM11 10h1v1h-1zM12 10h1v1h-1zM4 11h1v1h-1zM12 11h1v1h-1zM13 11h1v1h-1zM2 12h1v1h-1zM5 12h1v1h-1zM6 12h1v1h-1zM7 12h1v1h-1zM8 12h1v1h-1zM9 12h1v1h-1zM10 12h1v1h-1zM11 12h1v1h-1zM14 12h1v1h-1zM2 13h1v1h-1zM13 13h1v1h-1zM3 14h1v1h-1zM4 14h1v1h-1zM5 14h1v1h-1zM11 14h1v1h-1zM12 14h1v1h-1zM6 15h1v1h-1zM7 15h1v1h-1zM8 15h1v1h-1zM9 15h1v1h-1zM10 15h1v1h-1z" fill="#00008B"/></svg></div><div style="left:230px;top:618.69px;height:11px;font:bold 11px/11px 'Liberation Sans', sans-serif;color:#D4D0C8;white-space:pre;letter-spacing:0.55px">Overlay Manager Parameters</div><div style="left:450px;top:616px;width:16px;height:15px;background:#D4D0C8;box-shadow:inset -1px -1px #404040,inset 1px 1px #fff,inset -2px -2px #808080;"><svg style="position:absolute;left:3px;top:3px" width="8" height="8" shape-rendering="crispEdges"><path d="M0 0h1v1h-1zM1 0h1v1h-1zM6 0h1v1h-1zM7 0h1v1h-1zM0 1h1v1h-1zM1 1h1v1h-1zM2 1h1v1h-1zM5 1h1v1h-1zM6 1h1v1h-1zM7 1h1v1h-1zM1 2h1v1h-1zM2 2h1v1h-1zM3 2h1v1h-1zM4 2h1v1h-1zM5 2h1v1h-1zM6 2h1v1h-1zM2 3h1v1h-1zM3 3h1v1h-1zM4 3h1v1h-1zM5 3h1v1h-1zM2 4h1v1h-1zM3 4h1v1h-1zM4 4h1v1h-1zM5 4h1v1h-1zM1 5h1v1h-1zM2 5h1v1h-1zM3 5h1v1h-1zM4 5h1v1h-1zM5 5h1v1h-1zM6 5h1v1h-1zM0 6h1v1h-1zM1 6h1v1h-1zM2 6h1v1h-1zM5 6h1v1h-1zM6 6h1v1h-1zM7 6h1v1h-1zM0 7h1v1h-1zM1 7h1v1h-1zM6 7h1v1h-1zM7 7h1v1h-1z" fill="#000"/></svg></div><div style="left:209px;top:634px;width:259px;height:247px;background:#CCCCCC"></div><div style="left:209px;top:640px;width:13px;height:13px;"><div style="left:1px;top:1px;width:12px;height:12px;border:1px solid #fff"></div><div style="left:0;top:0;width:12px;height:12px;border:1px solid #666"></div></div><div style="left:226px;top:640.84px;font:bold 12px/12px 'Liberation Sans', sans-serif;color:#000;white-space:pre;text-shadow:0 0 0.3px;letter-spacing:-0.17px">Overlayed Objects on Near Clipping Plane</div><div style="left:209px;top:665px;width:13px;height:13px;"><div style="left:1px;top:1px;width:12px;height:12px;border:1px solid #fff"></div><div style="left:0;top:0;width:12px;height:12px;border:1px solid #666"></div><svg style="position:absolute;left:0;top:0" width="13" height="13" shape-rendering="crispEdges"><path d="M3 5h2v5H3zM9 3h1v2H9zM8 4h1v2H8zM7 5h1v2H7zM6 6h1v2H6zM5 7h1v2H5z" fill="#000"/></svg></div><div style="left:226px;top:665.84px;font:bold 12px/12px 'Liberation Sans', sans-serif;color:#000;white-space:pre;text-shadow:0 0 0.3px;letter-spacing:-0.17px">Labels Can Overlay Grass</div><div style="left:209px;top:690px;width:13px;height:13px;"><div style="left:1px;top:1px;width:12px;height:12px;border:1px solid #fff"></div><div style="left:0;top:0;width:12px;height:12px;border:1px solid #666"></div><svg style="position:absolute;left:0;top:0" width="13" height="13" shape-rendering="crispEdges"><path d="M3 5h2v5H3zM9 3h1v2H9zM8 4h1v2H8zM7 5h1v2H7zM6 6h1v2H6zM5 7h1v2H5z" fill="#000"/></svg></div><div style="left:226px;top:690.84px;font:bold 12px/12px 'Liberation Sans', sans-serif;color:#000;white-space:pre;text-shadow:0 0 0.3px;letter-spacing:-0.17px">Fixed Point Labels</div><div style="left:209px;top:715px;width:13px;height:13px;"><div style="left:1px;top:1px;width:12px;height:12px;border:1px solid #fff"></div><div style="left:0;top:0;width:12px;height:12px;border:1px solid #666"></div></div><div style="left:226px;top:715.84px;font:bold 12px/12px 'Liberation Sans', sans-serif;color:#000;white-space:pre;text-shadow:0 0 0.3px;letter-spacing:-0.17px">Animated Labels</div><div style="left:209px;top:740px;width:13px;height:13px;"><div style="left:1px;top:1px;width:12px;height:12px;border:1px solid #fff"></div><div style="left:0;top:0;width:12px;height:12px;border:1px solid #666"></div></div><div style="left:226px;top:740.84px;font:bold 12px/12px 'Liberation Sans', sans-serif;color:#000;white-space:pre;text-shadow:0 0 0.3px;letter-spacing:-0.17px">Show Fixed only when Visible</div><div style="left:209px;top:761.84px;font:bold 12px/12px 'Liberation Sans', sans-serif;color:#666699;white-space:pre;text-shadow:0 0 0.3px;letter-spacing:-0.15px">Absolute minimum size of font</div><div style="left:216px;top:780px;width:245px;height:7px;background:#fff"></div><div style="left:216px;top:780px;width:244px;height:6px;background:#CCCCCC;border:1px solid #666;box-shadow:inset 0 1px #999"></div><div style="left:332px;top:776px;width:15px;height:16px"><svg width="15" height="16" shape-rendering="crispEdges"><path d="M1 1h13v8l-7 7l-7-7z" fill="#CCCCCC"/>
<path d="M1 1h13v1H1zM1 1h1v8H1z" fill="#fff"/>
<path d="M1 0h13v1H1zM0 1h1v8H0zM14 1h1v8h-1zM1 9h1v1H1zM2 10h1v1H2zM3 11h1v1H3zM4 12h1v1H4zM5 13h1v1H5zM6 14h1v1H6zM7 15h1v1H7zM13 9h1v1h-1zM12 10h1v1h-1zM11 11h1v1h-1zM10 12h1v1h-1zM9 13h1v1H9zM8 14h1v1H8z" fill="#000"/>
<path d="M2 2h1v1H2zM6 2h1v1H6zM10 2h1v1h-1zM4 4h1v1H4zM8 4h1v1H8zM2 6h1v1H2zM6 6h1v1H6zM10 6h1v1h-1z" fill="#fff"/>
<path d="M3 3h1v1H3zM7 3h1v1H7zM11 3h1v1h-1zM5 5h1v1H5zM9 5h1v1H9zM3 7h1v1H3zM7 7h1v1H7zM11 7h1v1h-1z" fill="#000"/></svg></div><div style="left:216px;top:796px;width:1px;height:6px;background:#9999CC"></div><div style="left:277px;top:796px;width:1px;height:6px;background:#9999CC"></div><div style="left:338px;top:796px;width:1px;height:6px;background:#9999CC"></div><div style="left:399px;top:796px;width:1px;height:6px;background:#9999CC"></div><div style="left:460px;top:796px;width:1px;height:6px;background:#9999CC"></div><div style="left:196.0px;top:805.84px;width:40px;text-align:center;font:bold 12px/12px 'Liberation Sans', sans-serif;color:#666699;white-space:pre;text-shadow:0 0 0.3px">6</div><div style="left:257.0px;top:805.84px;width:40px;text-align:center;font:bold 12px/12px 'Liberation Sans', sans-serif;color:#666699;white-space:pre;text-shadow:0 0 0.3px">7</div><div style="left:318.0px;top:805.84px;width:40px;text-align:center;font:bold 12px/12px 'Liberation Sans', sans-serif;color:#666699;white-space:pre;text-shadow:0 0 0.3px">8</div><div style="left:379.0px;top:805.84px;width:40px;text-align:center;font:bold 12px/12px 'Liberation Sans', sans-serif;color:#666699;white-space:pre;text-shadow:0 0 0.3px">9</div><div style="left:440.0px;top:805.84px;width:40px;text-align:center;font:bold 12px/12px 'Liberation Sans', sans-serif;color:#666699;white-space:pre;text-shadow:0 0 0.3px">10</div><div style="left:209px;top:822.84px;font:bold 12px/12px 'Liberation Sans', sans-serif;color:#666699;white-space:pre;text-shadow:0 0 0.3px;">Popup Speed</div><div style="left:216px;top:842px;width:245px;height:7px;background:#fff"></div><div style="left:216px;top:842px;width:244px;height:6px;background:#CCCCCC;border:1px solid #666;box-shadow:inset 0 1px #999"></div><div style="left:261px;top:838px;width:15px;height:16px"><svg width="15" height="16" shape-rendering="crispEdges"><path d="M1 1h13v8l-7 7l-7-7z" fill="#CCCCCC"/>
<path d="M1 1h13v1H1zM1 1h1v8H1z" fill="#fff"/>
<path d="M1 0h13v1H1zM0 1h1v8H0zM14 1h1v8h-1zM1 9h1v1H1zM2 10h1v1H2zM3 11h1v1H3zM4 12h1v1H4zM5 13h1v1H5zM6 14h1v1H6zM7 15h1v1H7zM13 9h1v1h-1zM12 10h1v1h-1zM11 11h1v1h-1zM10 12h1v1h-1zM9 13h1v1H9zM8 14h1v1H8z" fill="#000"/>
<path d="M2 2h1v1H2zM6 2h1v1H6zM10 2h1v1h-1zM4 4h1v1H4zM8 4h1v1H8zM2 6h1v1H2zM6 6h1v1H6zM10 6h1v1h-1z" fill="#fff"/>
<path d="M3 3h1v1H3zM7 3h1v1H7zM11 3h1v1h-1zM5 5h1v1H5zM9 5h1v1H9zM3 7h1v1H3zM7 7h1v1H7zM11 7h1v1h-1z" fill="#000"/></svg></div><div style="left:216px;top:857px;width:1px;height:6px;background:#9999CC"></div><div style="left:229px;top:857px;width:1px;height:6px;background:#9999CC"></div><div style="left:242px;top:857px;width:1px;height:6px;background:#9999CC"></div><div style="left:255px;top:857px;width:1px;height:6px;background:#9999CC"></div><div style="left:267px;top:857px;width:1px;height:6px;background:#9999CC"></div><div style="left:280px;top:857px;width:1px;height:6px;background:#9999CC"></div><div style="left:293px;top:857px;width:1px;height:6px;background:#9999CC"></div><div style="left:306px;top:857px;width:1px;height:6px;background:#9999CC"></div><div style="left:319px;top:857px;width:1px;height:6px;background:#9999CC"></div><div style="left:332px;top:857px;width:1px;height:6px;background:#9999CC"></div><div style="left:344px;top:857px;width:1px;height:6px;background:#9999CC"></div><div style="left:357px;top:857px;width:1px;height:6px;background:#9999CC"></div><div style="left:370px;top:857px;width:1px;height:6px;background:#9999CC"></div><div style="left:383px;top:857px;width:1px;height:6px;background:#9999CC"></div><div style="left:396px;top:857px;width:1px;height:6px;background:#9999CC"></div><div style="left:409px;top:857px;width:1px;height:6px;background:#9999CC"></div><div style="left:421px;top:857px;width:1px;height:6px;background:#9999CC"></div><div style="left:434px;top:857px;width:1px;height:6px;background:#9999CC"></div><div style="left:447px;top:857px;width:1px;height:6px;background:#9999CC"></div><div style="left:460px;top:857px;width:1px;height:6px;background:#9999CC"></div><div style="left:196.0px;top:866.84px;width:40px;text-align:center;font:bold 12px/12px 'Liberation Sans', sans-serif;color:#666699;white-space:pre;text-shadow:0 0 0.3px">1</div><div style="left:208.8px;top:866.84px;width:40px;text-align:center;font:bold 12px/12px 'Liberation Sans', sans-serif;color:#666699;white-space:pre;text-shadow:0 0 0.3px">2</div><div style="left:221.7px;top:866.84px;width:40px;text-align:center;font:bold 12px/12px 'Liberation Sans', sans-serif;color:#666699;white-space:pre;text-shadow:0 0 0.3px">3</div><div style="left:234.5px;top:866.84px;width:40px;text-align:center;font:bold 12px/12px 'Liberation Sans', sans-serif;color:#666699;white-space:pre;text-shadow:0 0 0.3px">4</div><div style="left:247.4px;top:866.84px;width:40px;text-align:center;font:bold 12px/12px 'Liberation Sans', sans-serif;color:#666699;white-space:pre;text-shadow:0 0 0.3px">5</div><div style="left:260.2px;top:866.84px;width:40px;text-align:center;font:bold 12px/12px 'Liberation Sans', sans-serif;color:#666699;white-space:pre;text-shadow:0 0 0.3px">6</div><div style="left:273.1px;top:866.84px;width:40px;text-align:center;font:bold 12px/12px 'Liberation Sans', sans-serif;color:#666699;white-space:pre;text-shadow:0 0 0.3px">7</div><div style="left:285.9px;top:866.84px;width:40px;text-align:center;font:bold 12px/12px 'Liberation Sans', sans-serif;color:#666699;white-space:pre;text-shadow:0 0 0.3px">8</div><div style="left:298.7px;top:866.84px;width:40px;text-align:center;font:bold 12px/12px 'Liberation Sans', sans-serif;color:#666699;white-space:pre;text-shadow:0 0 0.3px">9</div><div style="left:311.6px;top:866.84px;width:40px;text-align:center;font:bold 12px/12px 'Liberation Sans', sans-serif;color:#666699;white-space:pre;text-shadow:0 0 0.3px">10</div><div style="left:324.4px;top:866.84px;width:40px;text-align:center;font:bold 12px/12px 'Liberation Sans', sans-serif;color:#666699;white-space:pre;text-shadow:0 0 0.3px">11</div><div style="left:337.3px;top:866.84px;width:40px;text-align:center;font:bold 12px/12px 'Liberation Sans', sans-serif;color:#666699;white-space:pre;text-shadow:0 0 0.3px">12</div><div style="left:350.1px;top:866.84px;width:40px;text-align:center;font:bold 12px/12px 'Liberation Sans', sans-serif;color:#666699;white-space:pre;text-shadow:0 0 0.3px">13</div><div style="left:362.9px;top:866.84px;width:40px;text-align:center;font:bold 12px/12px 'Liberation Sans', sans-serif;color:#666699;white-space:pre;text-shadow:0 0 0.3px">14</div><div style="left:375.8px;top:866.84px;width:40px;text-align:center;font:bold 12px/12px 'Liberation Sans', sans-serif;color:#666699;white-space:pre;text-shadow:0 0 0.3px">15</div><div style="left:388.6px;top:866.84px;width:40px;text-align:center;font:bold 12px/12px 'Liberation Sans', sans-serif;color:#666699;white-space:pre;text-shadow:0 0 0.3px">16</div><div style="left:401.5px;top:866.84px;width:40px;text-align:center;font:bold 12px/12px 'Liberation Sans', sans-serif;color:#666699;white-space:pre;text-shadow:0 0 0.3px">17</div><div style="left:414.3px;top:866.84px;width:40px;text-align:center;font:bold 12px/12px 'Liberation Sans', sans-serif;color:#666699;white-space:pre;text-shadow:0 0 0.3px">18</div><div style="left:427.2px;top:866.84px;width:40px;text-align:center;font:bold 12px/12px 'Liberation Sans', sans-serif;color:#666699;white-space:pre;text-shadow:0 0 0.3px">19</div><div style="left:440.0px;top:866.84px;width:40px;text-align:center;font:bold 12px/12px 'Liberation Sans', sans-serif;color:#666699;white-space:pre;text-shadow:0 0 0.3px">20</div><div style="left:494px;top:76px;width:318px;height:595px;background:#D4D0C8;box-shadow:inset -1px -1px #404040,inset 1px 1px #D4D0C8,inset -2px -2px #808080,inset 2px 2px #fff;"></div><div style="left:498px;top:80px;width:310px;height:19px;background:linear-gradient(to right,#808080,#C0C0C0)"></div><div style="left:500px;top:81px;width:16px;height:16px"><svg width="16" height="16" viewBox="0 0 16 16" shape-rendering="crispEdges"><rect width="16" height="16" fill="#fff"/><path d="M6 0h1v1h-1zM8 0h1v1h-1zM9 0h1v1h-1zM12 0h1v1h-1zM5 1h1v1h-1zM11 1h1v1h-1zM4 2h1v1h-1zM7 2h1v1h-1zM9 2h1v1h-1zM11 2h1v1h-1zM5 3h1v1h-1zM7 3h1v1h-1zM11 3h1v1h-1zM6 4h1v1h-1zM8 4h1v1h-1zM10 4h1v1h-1zM5 6h1v1h-1zM8 6h1v1h-1z" fill="#f00"/><path d="M3 5h1v1h-1zM4 5h1v1h-1zM5 5h1v1h-1zM6 5h1v1h-1zM7 5h1v1h-1zM8 5h1v1h-1zM9 5h1v1h-1zM10 5h1v1h-1zM12 5h1v1h-1zM13 5h1v1h-1zM14 5h1v1h-1zM2 6h1v1h-1zM4 6h1v1h-1zM11 6h1v1h-1zM15 6h1v1h-1zM2 7h1v1h-1zM5 7h1v1h-1zM6 7h1v1h-1zM7 7h1v1h-1zM8 7h1v1h-1zM9 7h1v1h-1zM10 7h1v1h-1zM12 7h1v1h-1zM15 7h1v1h-1zM2 8h1v1h-1zM3 8h1v1h-1zM11 8h1v1h-1zM14 8h1v1h-1zM3 9h1v1h-1zM5 9h1v1h-1zM7 9h1v1h-1zM8 9h1v1h-1zM10 9h1v1h-1zM13 9h1v1h-1zM3 10h1v1h-1zM11 10h1v1h-1zM12 10h1v1h-1zM4 11h1v1h-1zM12 11h1v1h-1zM13 11h1v1h-1zM2 12h1v1h-1zM5 12h1v1h-1zM6 12h1v1h-1zM7 12h1v1h-1zM8 12h1v1h-1zM9 12h1v1h-1zM10 12h1v1h-1zM11 12h1v1h-1zM14 12h1v1h-1zM2 13h1v1h-1zM13 13h1v1h-1zM3 14h1v1h-1zM4 14h1v1h-1zM5 14h1v1h-1zM11 14h1v1h-1zM12 14h1v1h-1zM6 15h1v1h-1zM7 15h1v1h-1zM8 15h1v1h-1zM9 15h1v1h-1zM10 15h1v1h-1z" fill="#00008B"/></svg></div><div style="left:519px;top:84.69px;height:11px;font:bold 11px/11px 'Liberation Sans', sans-serif;color:#D4D0C8;white-space:pre;letter-spacing:0.37px">Building Parameters</div><div style="left:790px;top:82px;width:16px;height:15px;background:#D4D0C8;box-shadow:inset -1px -1px #404040,inset 1px 1px #fff,inset -2px -2px #808080;"><svg style="position:absolute;left:3px;top:3px" width="8" height="8" shape-rendering="crispEdges"><path d="M0 0h1v1h-1zM1 0h1v1h-1zM6 0h1v1h-1zM7 0h1v1h-1zM0 1h1v1h-1zM1 1h1v1h-1zM2 1h1v1h-1zM5 1h1v1h-1zM6 1h1v1h-1zM7 1h1v1h-1zM1 2h1v1h-1zM2 2h1v1h-1zM3 2h1v1h-1zM4 2h1v1h-1zM5 2h1v1h-1zM6 2h1v1h-1zM2 3h1v1h-1zM3 3h1v1h-1zM4 3h1v1h-1zM5 3h1v1h-1zM2 4h1v1h-1zM3 4h1v1h-1zM4 4h1v1h-1zM5 4h1v1h-1zM1 5h1v1h-1zM2 5h1v1h-1zM3 5h1v1h-1zM4 5h1v1h-1zM5 5h1v1h-1zM6 5h1v1h-1zM0 6h1v1h-1zM1 6h1v1h-1zM2 6h1v1h-1zM5 6h1v1h-1zM6 6h1v1h-1zM7 6h1v1h-1zM0 7h1v1h-1zM1 7h1v1h-1zM6 7h1v1h-1zM7 7h1v1h-1z" fill="#000"/></svg></div><div style="left:772px;top:82px;width:16px;height:15px;background:#D4D0C8;box-shadow:inset -1px -1px #404040,inset 1px 1px #fff,inset -2px -2px #808080;"><div style="left:2px;top:3px;width:9px;height:9px;border:1px solid #000;border-top-width:2px"></div></div><div style="left:756px;top:82px;width:16px;height:15px;background:#D4D0C8;box-shadow:inset -1px -1px #404040,inset 1px 1px #fff,inset -2px -2px #808080;"><div style="left:3px;top:10px;width:7px;height:2px;background:#000"></div></div><div style="left:498px;top:100px;width:310px;height:567px;background:#CCCCCC"></div><div style="left:504px;top:105.84px;font:bold 12px/12px 'Liberation Sans', sans-serif;color:#000;white-space:pre;text-shadow:0 0 0.3px;">File</div><div style="left:534px;top:105.84px;font:bold 12px/12px 'Liberation Sans', sans-serif;color:#000;white-space:pre;text-shadow:0 0 0.3px;">Parameters</div><div style="left:615px;top:105.84px;font:bold 12px/12px 'Liberation Sans', sans-serif;color:#000;white-space:pre;text-shadow:0 0 0.3px;">Mouse Mode</div><div style="left:498px;top:122px;width:309px;height:1px;background:#808080"></div><div style="left:500px;top:126px;width:8px;height:536px"><svg width="8" height="536" shape-rendering="crispEdges"><path d="M2 0h1v1H2zM4 2h1v1H4zM2 4h1v1H2zM4 6h1v1H4zM2 8h1v1H2zM4 10h1v1H4zM2 12h1v1H2zM4 14h1v1H4zM2 16h1v1H2zM4 18h1v1H4zM2 20h1v1H2zM4 22h1v1H4zM2 24h1v1H2zM4 26h1v1H4zM2 28h1v1H2zM4 30h1v1H4zM2 32h1v1H2zM4 34h1v1H4zM2 36h1v1H2zM4 38h1v1H4zM2 40h1v1H2zM4 42h1v1H4zM2 44h1v1H2zM4 46h1v1H4zM2 48h1v1H2zM4 50h1v1H4zM2 52h1v1H2zM4 54h1v1H4zM2 56h1v1H2zM4 58h1v1H4zM2 60h1v1H2zM4 62h1v1H4zM2 64h1v1H2zM4 66h1v1H4zM2 68h1v1H2zM4 70h1v1H4zM2 72h1v1H2zM4 74h1v1H4zM2 76h1v1H2zM4 78h1v1H4zM2 80h1v1H2zM4 82h1v1H4zM2 84h1v1H2zM4 86h1v1H4zM2 88h1v1H2zM4 90h1v1H4zM2 92h1v1H2zM4 94h1v1H4zM2 96h1v1H2zM4 98h1v1H4zM2 100h1v1H2zM4 102h1v1H4zM2 104h1v1H2zM4 106h1v1H4zM2 108h1v1H2zM4 110h1v1H4zM2 112h1v1H2zM4 114h1v1H4zM2 116h1v1H2zM4 118h1v1H4zM2 120h1v1H2zM4 122h1v1H4zM2 124h1v1H2zM4 126h1v1H4zM2 128h1v1H2zM4 130h1v1H4zM2 132h1v1H2zM4 134h1v1H4zM2 136h1v1H2zM4 138h1v1H4zM2 140h1v1H2zM4 142h1v1H4zM2 144h1v1H2zM4 146h1v1H4zM2 148h1v1H2zM4 150h1v1H4zM2 152h1v1H2zM4 154h1v1H4zM2 156h1v1H2zM4 158h1v1H4zM2 160h1v1H2zM4 162h1v1H4zM2 164h1v1H2zM4 166h1v1H4zM2 168h1v1H2zM4 170h1v1H4zM2 172h1v1H2zM4 174h1v1H4zM2 176h1v1H2zM4 178h1v1H4zM2 180h1v1H2zM4 182h1v1H4zM2 184h1v1H2zM4 186h1v1H4zM2 188h1v1H2zM4 190h1v1H4zM2 192h1v1H2zM4 194h1v1H4zM2 196h1v1H2zM4 198h1v1H4zM2 200h1v1H2zM4 202h1v1H4zM2 204h1v1H2zM4 206h1v1H4zM2 208h1v1H2zM4 210h1v1H4zM2 212h1v1H2zM4 214h1v1H4zM2 216h1v1H2zM4 218h1v1H4zM2 220h1v1H2zM4 222h1v1H4zM2 224h1v1H2zM4 226h1v1H4zM2 228h1v1H2zM4 230h1v1H4zM2 232h1v1H2zM4 234h1v1H4zM2 236h1v1H2zM4 238h1v1H4zM2 240h1v1H2zM4 242h1v1H4zM2 244h1v1H2zM4 246h1v1H4zM2 248h1v1H2zM4 250h1v1H4zM2 252h1v1H2zM4 254h1v1H4zM2 256h1v1H2zM4 258h1v1H4zM2 260h1v1H2zM4 262h1v1H4zM2 264h1v1H2zM4 266h1v1H4zM2 268h1v1H2zM4 270h1v1H4zM2 272h1v1H2zM4 274h1v1H4zM2 276h1v1H2zM4 278h1v1H4zM2 280h1v1H2zM4 282h1v1H4zM2 284h1v1H2zM4 286h1v1H4zM2 288h1v1H2zM4 290h1v1H4zM2 292h1v1H2zM4 294h1v1H4zM2 296h1v1H2zM4 298h1v1H4zM2 300h1v1H2zM4 302h1v1H4zM2 304h1v1H2zM4 306h1v1H4zM2 308h1v1H2zM4 310h1v1H4zM2 312h1v1H2zM4 314h1v1H4zM2 316h1v1H2zM4 318h1v1H4zM2 320h1v1H2zM4 322h1v1H4zM2 324h1v1H2zM4 326h1v1H4zM2 328h1v1H2zM4 330h1v1H4zM2 332h1v1H2zM4 334h1v1H4zM2 336h1v1H2zM4 338h1v1H4zM2 340h1v1H2zM4 342h1v1H4zM2 344h1v1H2zM4 346h1v1H4zM2 348h1v1H2zM4 350h1v1H4zM2 352h1v1H2zM4 354h1v1H4zM2 356h1v1H2zM4 358h1v1H4zM2 360h1v1H2zM4 362h1v1H4zM2 364h1v1H2zM4 366h1v1H4zM2 368h1v1H2zM4 370h1v1H4zM2 372h1v1H2zM4 374h1v1H4zM2 376h1v1H2zM4 378h1v1H4zM2 380h1v1H2zM4 382h1v1H4zM2 384h1v1H2zM4 386h1v1H4zM2 388h1v1H2zM4 390h1v1H4zM2 392h1v1H2zM4 394h1v1H4zM2 396h1v1H2zM4 398h1v1H4zM2 400h1v1H2zM4 402h1v1H4zM2 404h1v1H2zM4 406h1v1H4zM2 408h1v1H2zM4 410h1v1H4zM2 412h1v1H2zM4 414h1v1H4zM2 416h1v1H2zM4 418h1v1H4zM2 420h1v1H2zM4 422h1v1H4zM2 424h1v1H2zM4 426h1v1H4zM2 428h1v1H2zM4 430h1v1H4zM2 432h1v1H2zM4 434h1v1H4zM2 436h1v1H2zM4 438h1v1H4zM2 440h1v1H2zM4 442h1v1H4zM2 444h1v1H2zM4 446h1v1H4zM2 448h1v1H2zM4 450h1v1H4zM2 452h1v1H2zM4 454h1v1H4zM2 456h1v1H2zM4 458h1v1H4zM2 460h1v1H2zM4 462h1v1H4zM2 464h1v1H2zM4 466h1v1H4zM2 468h1v1H2zM4 470h1v1H4zM2 472h1v1H2zM4 474h1v1H4zM2 476h1v1H2zM4 478h1v1H4zM2 480h1v1H2zM4 482h1v1H4zM2 484h1v1H2zM4 486h1v1H4zM2 488h1v1H2zM4 490h1v1H4zM2 492h1v1H2zM4 494h1v1H4zM2 496h1v1H2zM4 498h1v1H4zM2 500h1v1H2zM4 502h1v1H4zM2 504h1v1H2zM4 506h1v1H4zM2 508h1v1H2zM4 510h1v1H4zM2 512h1v1H2zM4 514h1v1H4zM2 516h1v1H2zM4 518h1v1H4zM2 520h1v1H2zM4 522h1v1H4zM2 524h1v1H2zM4 526h1v1H4zM2 528h1v1H2zM4 530h1v1H4zM2 532h1v1H2zM4 534h1v1H4z" fill="#fff"/><path d="M3 1h1v1H3zM5 3h1v1H5zM3 5h1v1H3zM5 7h1v1H5zM3 9h1v1H3zM5 11h1v1H5zM3 13h1v1H3zM5 15h1v1H5zM3 17h1v1H3zM5 19h1v1H5zM3 21h1v1H3zM5 23h1v1H5zM3 25h1v1H3zM5 27h1v1H5zM3 29h1v1H3zM5 31h1v1H5zM3 33h1v1H3zM5 35h1v1H5zM3 37h1v1H3zM5 39h1v1H5zM3 41h1v1H3zM5 43h1v1H5zM3 45h1v1H3zM5 47h1v1H5zM3 49h1v1H3zM5 51h1v1H5zM3 53h1v1H3zM5 55h1v1H5zM3 57h1v1H3zM5 59h1v1H5zM3 61h1v1H3zM5 63h1v1H5zM3 65h1v1H3zM5 67h1v1H5zM3 69h1v1H3zM5 71h1v1H5zM3 73h1v1H3zM5 75h1v1H5zM3 77h1v1H3zM5 79h1v1H5zM3 81h1v1H3zM5 83h1v1H5zM3 85h1v1H3zM5 87h1v1H5zM3 89h1v1H3zM5 91h1v1H5zM3 93h1v1H3zM5 95h1v1H5zM3 97h1v1H3zM5 99h1v1H5zM3 101h1v1H3zM5 103h1v1H5zM3 105h1v1H3zM5 107h1v1H5zM3 109h1v1H3zM5 111h1v1H5zM3 113h1v1H3zM5 115h1v1H5zM3 117h1v1H3zM5 119h1v1H5zM3 121h1v1H3zM5 123h1v1H5zM3 125h1v1H3zM5 127h1v1H5zM3 129h1v1H3zM5 131h1v1H5zM3 133h1v1H3zM5 135h1v1H5zM3 137h1v1H3zM5 139h1v1H5zM3 141h1v1H3zM5 143h1v1H5zM3 145h1v1H3zM5 147h1v1H5zM3 149h1v1H3zM5 151h1v1H5zM3 153h1v1H3zM5 155h1v1H5zM3 157h1v1H3zM5 159h1v1H5zM3 161h1v1H3zM5 163h1v1H5zM3 165h1v1H3zM5 167h1v1H5zM3 169h1v1H3zM5 171h1v1H5zM3 173h1v1H3zM5 175h1v1H5zM3 177h1v1H3zM5 179h1v1H5zM3 181h1v1H3zM5 183h1v1H5zM3 185h1v1H3zM5 187h1v1H5zM3 189h1v1H3zM5 191h1v1H5zM3 193h1v1H3zM5 195h1v1H5zM3 197h1v1H3zM5 199h1v1H5zM3 201h1v1H3zM5 203h1v1H5zM3 205h1v1H3zM5 207h1v1H5zM3 209h1v1H3zM5 211h1v1H5zM3 213h1v1H3zM5 215h1v1H5zM3 217h1v1H3zM5 219h1v1H5zM3 221h1v1H3zM5 223h1v1H5zM3 225h1v1H3zM5 227h1v1H5zM3 229h1v1H3zM5 231h1v1H5zM3 233h1v1H3zM5 235h1v1H5zM3 237h1v1H3zM5 239h1v1H5zM3 241h1v1H3zM5 243h1v1H5zM3 245h1v1H3zM5 247h1v1H5zM3 249h1v1H3zM5 251h1v1H5zM3 253h1v1H3zM5 255h1v1H5zM3 257h1v1H3zM5 259h1v1H5zM3 261h1v1H3zM5 263h1v1H5zM3 265h1v1H3zM5 267h1v1H5zM3 269h1v1H3zM5 271h1v1H5zM3 273h1v1H3zM5 275h1v1H5zM3 277h1v1H3zM5 279h1v1H5zM3 281h1v1H3zM5 283h1v1H5zM3 285h1v1H3zM5 287h1v1H5zM3 289h1v1H3zM5 291h1v1H5zM3 293h1v1H3zM5 295h1v1H5zM3 297h1v1H3zM5 299h1v1H5zM3 301h1v1H3zM5 303h1v1H5zM3 305h1v1H3zM5 307h1v1H5zM3 309h1v1H3zM5 311h1v1H5zM3 313h1v1H3zM5 315h1v1H5zM3 317h1v1H3zM5 319h1v1H5zM3 321h1v1H3zM5 323h1v1H5zM3 325h1v1H3zM5 327h1v1H5zM3 329h1v1H3zM5 331h1v1H5zM3 333h1v1H3zM5 335h1v1H5zM3 337h1v1H3zM5 339h1v1H5zM3 341h1v1H3zM5 343h1v1H5zM3 345h1v1H3zM5 347h1v1H5zM3 349h1v1H3zM5 351h1v1H5zM3 353h1v1H3zM5 355h1v1H5zM3 357h1v1H3zM5 359h1v1H5zM3 361h1v1H3zM5 363h1v1H5zM3 365h1v1H3zM5 367h1v1H5zM3 369h1v1H3zM5 371h1v1H5zM3 373h1v1H3zM5 375h1v1H5zM3 377h1v1H3zM5 379h1v1H5zM3 381h1v1H3zM5 383h1v1H5zM3 385h1v1H3zM5 387h1v1H5zM3 389h1v1H3zM5 391h1v1H5zM3 393h1v1H3zM5 395h1v1H5zM3 397h1v1H3zM5 399h1v1H5zM3 401h1v1H3zM5 403h1v1H5zM3 405h1v1H3zM5 407h1v1H5zM3 409h1v1H3zM5 411h1v1H5zM3 413h1v1H3zM5 415h1v1H5zM3 417h1v1H3zM5 419h1v1H5zM3 421h1v1H3zM5 423h1v1H5zM3 425h1v1H3zM5 427h1v1H5zM3 429h1v1H3zM5 431h1v1H5zM3 433h1v1H3zM5 435h1v1H5zM3 437h1v1H3zM5 439h1v1H5zM3 441h1v1H3zM5 443h1v1H5zM3 445h1v1H3zM5 447h1v1H5zM3 449h1v1H3zM5 451h1v1H5zM3 453h1v1H3zM5 455h1v1H5zM3 457h1v1H3zM5 459h1v1H5zM3 461h1v1H3zM5 463h1v1H5zM3 465h1v1H3zM5 467h1v1H5zM3 469h1v1H3zM5 471h1v1H5zM3 473h1v1H3zM5 475h1v1H5zM3 477h1v1H3zM5 479h1v1H5zM3 481h1v1H3zM5 483h1v1H5zM3 485h1v1H3zM5 487h1v1H5zM3 489h1v1H3zM5 491h1v1H5zM3 493h1v1H3zM5 495h1v1H5zM3 497h1v1H3zM5 499h1v1H5zM3 501h1v1H3zM5 503h1v1H5zM3 505h1v1H3zM5 507h1v1H5zM3 509h1v1H3zM5 511h1v1H5zM3 513h1v1H3zM5 515h1v1H5zM3 517h1v1H3zM5 519h1v1H5zM3 521h1v1H3zM5 523h1v1H5zM3 525h1v1H3zM5 527h1v1H5zM3 529h1v1H3zM5 531h1v1H5zM3 533h1v1H3zM5 535h1v1H5z" fill="#333"/></svg></div><div style="left:508px;top:123px;width:299px;height:1px;background:#666"></div><div style="left:508px;top:123px;width:1px;height:544px;background:#666"></div><div style="left:509px;top:124px;width:298px;height:1px;background:#DADADA"></div><div style="left:509px;top:124px;width:1px;height:542px;background:#DADADA"></div><div style="left:807px;top:123px;width:1px;height:544px;background:#fff"></div><div style="left:509px;top:666px;width:298px;height:1px;background:#fff"></div><div style="left:514px;top:129px;width:288px;height:531px"><svg width="288" height="531" viewBox="514 129 288 531"><rect x="514" y="129" width="288" height="532" fill="#1E1E1E"/><rect x="515" y="130" width="286" height="530" fill="#444444"/><rect x="524" y="131" width="12" height="18" fill="#74C83E"/><polygon points="553,130 618,130 618,151 595,151 592,155 580,155 577,151 553,151" fill="#CF4812"/><rect x="548" y="137" width="4" height="2" fill="#ccc"/><rect x="562" y="155" width="14" height="6" fill="#74C83E"/><rect x="597" y="155" width="13" height="6" fill="#74C83E"/><rect x="529" y="160" width="11" height="28" fill="#2845B8"/><rect x="529" y="161" width="11" height="6" fill="#6F8AD8"/><rect x="529" y="181" width="11" height="6" fill="#6F8AD8"/><rect x="546" y="160" width="11" height="28" fill="#2845B8"/><rect x="546" y="161" width="11" height="6" fill="#6F8AD8"/><rect x="546" y="181" width="11" height="6" fill="#6F8AD8"/><rect x="563" y="167" width="18" height="17" fill="#74C83E"/><rect x="592" y="167" width="18" height="17" fill="#74C83E"/><rect x="562" y="190" width="19" height="8" fill="#74C83E"/><rect x="559" y="195" width="5" height="6" fill="#74C83E"/><rect x="601" y="190" width="9" height="8" fill="#74C83E"/><rect x="580" y="203" width="10" height="11" fill="#74C83E"/><rect x="523" y="203" width="23" height="42" fill="#CF4812"/><rect x="569" y="215" width="27" height="30" fill="#CC0808"/><polygon points="523,245 544,245 546,238 552,232 558,230 564,232 570,238 572,245 596,245 596,273 523,273" fill="#EE3535"/><polygon points="634,133 682,133 682,137 689,138 689,168 682,169 682,173 634,173 634,169 627,168 627,138 634,137" fill="#FFFFFF"/><rect x="628" y="168" width="6" height="5" fill="#74C83E"/><polygon points="689,156 693,156 693,173 682,173 682,169 689,169" fill="#74C83E"/><polygon points="700,134 786,134 786,158 738,158 738,165 712,165 706,168 700,163" fill="#AA0404"/><polygon points="738,158 793,158 793,244 770,244 770,189 738,189" fill="#CF4812"/><polygon points="718,165 741,165 741,211 746,211 746,221 704,221 704,213 712,211 718,213" fill="#F55010"/><rect x="770" y="205" width="23" height="39" fill="#F55010"/><polygon points="720,240 730,240 730,236 746,236 750,232 758,230 766,232 770,237 793,237 793,273 720,273" fill="#CF4812"/><circle cx="657.7" cy="214" r="32" fill="#EEEEEE"/><polygon points="608,214 704,214 704,279 693,279 693,277 630,277 630,279 608,279" fill="#EEEEEE"/><rect x="522" y="284" width="22" height="53" fill="#F55010"/><path d="M559 285h48v48h1v5h-49z" fill="none"/><rect x="560.0" y="286.0" width="47" height="51" fill="none" stroke="#74C83E" stroke-width="2"/><rect x="562" y="288" width="13" height="12" fill="#5E9E26"/><rect x="580" y="288" width="12" height="9" fill="#5E9E26"/><rect x="561" y="303" width="18" height="19" fill="#5E9E26"/><rect x="594" y="317" width="10" height="9" fill="#5E9E26"/><rect x="577" y="321" width="12" height="15" fill="#5E9E26"/><rect x="573" y="329" width="33" height="7" fill="#5E9E26"/><polyline points="556,288 556,307 546,307" fill="none" stroke="#74C83E" stroke-width="1.5"/><polyline points="546,311 555,311 555,336" fill="none" stroke="#74C83E" stroke-width="1.5"/><polyline points="595,288 595,292 607,292" fill="none" stroke="#74C83E" stroke-width="1.5"/><rect x="542" y="345" width="42" height="21" rx="8" fill="#DD1010"/><rect x="561" y="340" width="17" height="5" fill="#74C83E"/><rect x="582" y="340" width="10" height="9" fill="#74C83E"/><rect x="598" y="340" width="9" height="9" fill="#5E9E26"/><rect x="549" y="366" width="20" height="5" fill="#74C83E"/><rect x="573" y="361" width="20" height="10" fill="#74C83E"/><rect x="597" y="360" width="10" height="11" fill="#5E9E26"/><rect x="543" y="364" width="5" height="11" fill="#74C83E"/><rect x="522" y="375" width="23" height="51" fill="#F55010"/><rect x="551.0" y="374.0" width="56" height="37" fill="none" stroke="#74C83E" stroke-width="2"/><rect x="565" y="377" width="39" height="47" fill="#5E9E26"/><rect x="545" y="381" width="14" height="42" fill="#74C83E"/><rect x="564" y="400" width="32" height="23" fill="#5E9E26"/><rect x="720" y="283" width="22" height="54" fill="#CC0404"/><rect x="772" y="283" width="22" height="54" fill="#F55010"/><path d="M736 345q10-5 20-4q8-4 16 0q10 2 11 14q0 10-10 13q-8 5-18 3q-10 3-20-2q-6-6-4-14q1-8 5-10z" fill="#CF4812"/><rect x="783" y="339" width="10" height="16" fill="#AAAAAA"/><rect x="783" y="358" width="10" height="13" fill="#AAAAAA"/><path d="M716 383q8-3 16 0q6 4 5 12q0 10-9 11q-9 1-14-3q-4-5-2-12q1-6 4-8z" fill="#F55010"/><rect x="772" y="375" width="22" height="52" fill="#F55010"/><polyline points="709,289 709,305 716,305" fill="none" stroke="#74C83E" stroke-width="1.5"/><polyline points="716,313 709,313 709,337 716,337" fill="none" stroke="#74C83E" stroke-width="1.5"/><rect x="708.75" y="340.75" width="16.5" height="10.5" fill="none" stroke="#74C83E" stroke-width="1.5"/><rect x="708.75" y="360.75" width="16.5" height="10.5" fill="none" stroke="#74C83E" stroke-width="1.5"/><rect x="708.5" y="375.5" width="57" height="30" fill="none" stroke="#AAAAAA" stroke-width="1"/><polyline points="709,375 709,406" fill="none" stroke="#74C83E" stroke-width="1.5"/><rect x="731" y="376" width="10" height="5" fill="#74C83E"/><rect x="748" y="379" width="6" height="7" fill="#74C83E"/><rect x="758" y="385" width="4" height="5" fill="#74C83E"/><rect x="749" y="392" width="5" height="6" fill="#74C83E"/><polygon points="641,318 675,318 680,323 680,334 694,334 694,378 680,378 680,387 675,392 641,392 637,387 637,378 621,378 621,338 625,334 637,334 637,323" fill="#FFFFFF"/><polyline points="632,322 632,313 685,313 685,326" fill="none" stroke="#74C83E" stroke-width="2"/><polyline points="628,330 616,330 616,381 628,381" fill="none" stroke="#74C83E" stroke-width="2"/><polyline points="688,330 701,330 701,381 688,381" fill="none" stroke="#74C83E" stroke-width="2"/><rect x="615" y="312" width="12" height="13" fill="#5E9E26"/><rect x="616.0" y="313.0" width="10" height="11" fill="none" stroke="#74C83E" stroke-width="2"/><rect x="690" y="312" width="13" height="13" fill="#5E9E26"/><rect x="691.0" y="313.0" width="11" height="11" fill="none" stroke="#74C83E" stroke-width="2"/><rect x="615" y="386" width="12" height="19" fill="#5E9E26"/><rect x="616.0" y="387.0" width="10" height="17" fill="none" stroke="#74C83E" stroke-width="2"/><rect x="690" y="386" width="13" height="19" fill="#5E9E26"/><rect x="691.0" y="387.0" width="11" height="17" fill="none" stroke="#74C83E" stroke-width="2"/><rect x="632" y="385" width="9" height="21" fill="#74C83E"/><rect x="674" y="382" width="11" height="24" fill="#74C83E"/><rect x="631" y="290" width="7" height="12" fill="#74C83E"/><rect x="679" y="290" width="6" height="12" fill="#74C83E"/><rect x="642" y="287" width="33" height="1" fill="#AAAAAA"/><rect x="642" y="305" width="33" height="1" fill="#AAAAAA"/><rect x="657" y="293" width="4" height="4" fill="#AAAAAA"/><rect x="693.75" y="286.75" width="7.5" height="18.5" fill="none" stroke="#74C83E" stroke-width="1.5"/><polyline points="632,412.5 600.5,412.5 600.5,456" fill="none" stroke="#AAAAAA" stroke-width="1"/><polyline points="600.5,440.5 611,440.5" fill="none" stroke="#AAAAAA" stroke-width="1"/><polyline points="682.5,426 682.5,413.5 715.5,413.5 715.5,456" fill="none" stroke="#AAAAAA" stroke-width="1"/><polyline points="706,434.5 715.5,434.5" fill="none" stroke="#AAAAAA" stroke-width="1"/><polyline points="706,440.5 715.5,440.5" fill="none" stroke="#AAAAAA" stroke-width="1"/><rect x="623" y="427" width="8" height="6" fill="#AAAAAA"/><rect x="685" y="427" width="9" height="8" fill="#AAAAAA"/><rect x="685" y="440" width="8" height="8" fill="#AAAAAA"/><rect x="695" y="440" width="7" height="8" fill="#AAAAAA"/><rect x="704" y="452" width="3" height="4" fill="#AAAAAA"/><rect x="614" y="440" width="7" height="7" fill="#AAAAAA"/><polyline points="719,409 719,426 741,426" fill="none" stroke="#74C83E" stroke-width="1.5"/><polyline points="741,426 745,421 760,421 760,409 766,409" fill="none" stroke="#74C83E" stroke-width="1.2"/><polyline points="746,426 766,426 766,419" fill="none" stroke="#74C83E" stroke-width="1.2"/><rect x="529" y="463" width="74" height="8" fill="#74C83E"/><rect x="610" y="463" width="46" height="8" fill="#5E9E26"/><rect x="664" y="463" width="42" height="8" fill="#5E9E26"/><rect x="714" y="463" width="68" height="8" fill="#74C83E"/><rect x="529" y="479" width="74" height="8" fill="#74C83E"/><rect x="610" y="479" width="46" height="8" fill="#5E9E26"/><rect x="664" y="479" width="42" height="8" fill="#5E9E26"/><rect x="714" y="479" width="68" height="8" fill="#74C83E"/><polygon points="522,436 549,436 551,434 570,434 572,436 596,436 596,457 522,457" fill="#CF4812"/><polygon points="719,435 746,435 748,433 770,433 772,435 794,435 794,457 719,457" fill="#CF4812"/><rect x="522" y="493" width="74" height="21" fill="#F55010"/><rect x="720" y="492" width="74" height="21" fill="#F55010"/><rect x="602" y="493" width="3" height="5" fill="#AAAAAA"/><rect x="612" y="494" width="21" height="3" fill="#74C83E"/><rect x="635" y="493" width="3" height="5" fill="#AAAAAA"/><rect x="682" y="494" width="22" height="3" fill="#74C83E"/><rect x="597" y="507" width="6" height="8" fill="#74C83E"/><rect x="714" y="504" width="6" height="10" fill="#74C83E"/><rect x="607" y="501" width="40" height="86" fill="#5E9E26"/><rect x="670" y="501" width="39" height="86" fill="#5E9E26"/><polygon points="572,519 603,519 603,569 555,569 555,532 572,532" fill="#5E9E26"/><rect x="523" y="520" width="23" height="49" fill="#F55010"/><rect x="547" y="522" width="2" height="14" fill="#74C83E"/><rect x="714" y="519" width="24" height="54" fill="#5E9E26"/><path d="M748 542q0-10 8.5-10t8.5 10v18q0 5-8.5 6q-8.5-1-8.5-6z" fill="#5E9E26"/><path d="M748 592q0-9 8.5-9t8.5 9v15q0 8-8.5 8q-8.5 0-8.5-8z" fill="#5E9E26"/><circle cx="756" cy="574" r="5" fill="#AAAAAA"/><polygon points="770,520 793,520 793,572 780,572 778,569 770,569" fill="#CF4812"/><polygon points="770,578 793,578 793,625 770,625 770,612 777,612 777,598 770,598" fill="#F55010"/><polygon points="720,622 748,622 748,619 766,619 766,622 793,622 793,654 720,654" fill="#CF4812"/><rect x="714" y="578" width="30" height="8" fill="#74C83E"/><rect x="694" y="592" width="16" height="16" fill="#74C83E"/><rect x="612" y="595" width="93" height="59" fill="#FFFFFF"/><rect x="630" y="586" width="56" height="8" fill="#AAAAAA"/><rect x="524" y="575" width="24" height="8" fill="#74C83E"/><rect x="568" y="575" width="32" height="4" fill="#74C83E"/><polygon points="548,579 599,579 599,601 594,591" fill="#AAAAAA"/><polygon points="523,583 548,583 548,580 594,591 598,601 597,634 523,634" fill="#F55010"/><rect x="523" y="634" width="74" height="20" fill="#CF4812"/><polyline points="658,430 658,493 709,493" fill="none" stroke="#fff" stroke-width="2"/><polyline points="658,491 626,443" fill="none" stroke="#DD44DD" stroke-width="2"/><polyline points="626,443 640,447" fill="none" stroke="#DD44DD" stroke-width="1"/><polyline points="626,443 626,457" fill="none" stroke="#DD44DD" stroke-width="1"/><rect x="614" y="440" width="7" height="7" fill="#AAAAAA"/><rect x="623" y="440" width="8" height="7" fill="#DD66DD"/><polyline points="658,494 614,449" fill="none" stroke="#E8E830" stroke-width="2"/><polyline points="614,449 621,467" fill="none" stroke="#E8E830" stroke-width="1"/><polyline points="614,449 631,452" fill="none" stroke="#E8E830" stroke-width="1"/><text x="599" y="437" fill="#E040E0" font-size="10" font-weight="bold" font-family="Liberation Sans">True North</text><text x="553" y="468" fill="#E0E030" font-size="10" font-weight="bold" font-family="Liberation Sans">Magn. North</text><text x="651" y="429" fill="#fff" font-size="12" font-weight="bold" font-family="Liberation Sans">+Y</text><text x="711" y="498" fill="#fff" font-size="12" font-weight="bold" font-family="Liberation Sans">+X</text><text x="585" y="139" fill="#fff" font-size="6" font-family="Liberation Serif" text-anchor="middle">Pupin</text><text x="658" y="152" fill="#333" font-size="6" font-family="Liberation Serif" text-anchor="middle">CEPSR</text><text x="743" y="144" fill="#fff" font-size="6" font-family="Liberation Serif" text-anchor="middle">Mudd</text><text x="773" y="172" fill="#fff" font-size="5" font-family="Liberation Serif" text-anchor="middle">Computer Science</text><text x="729" y="193" fill="#fff" font-size="6" font-family="Liberation Serif" text-anchor="middle">Fairchild</text><text x="533" y="224" fill="#fff" font-size="5.5" font-family="Liberation Serif" text-anchor="middle">Chandler</text><text x="583" y="226" fill="#fff" font-size="5.5" font-family="Liberation Serif" text-anchor="middle">Havemeyer Ext.</text><text x="657" y="243" fill="#333" font-size="6" font-family="Liberation Serif" text-anchor="middle">URIS</text><text x="782" y="222" fill="#fff" font-size="5" font-family="Liberation Serif" text-anchor="middle">Schermerhorn Ext.</text><text x="558" y="257" fill="#fff" font-size="5.5" font-family="Liberation Serif" text-anchor="middle">Havemeyer</text><text x="756" y="254" fill="#fff" font-size="5.5" font-family="Liberation Serif" text-anchor="middle">Schermerhorn</text><text x="533" y="309" fill="#fff" font-size="5.5" font-family="Liberation Serif" text-anchor="middle">Math</text><text x="731" y="309" fill="#fff" font-size="5.5" font-family="Liberation Serif" text-anchor="middle">Avery</text><text x="783" y="309" fill="#fff" font-size="5" font-family="Liberation Serif" text-anchor="middle">Fayerweather</text><text x="561" y="355" fill="#fff" font-size="6" font-family="Liberation Serif" text-anchor="middle">Earl</text><text x="659" y="354" fill="#333" font-size="5.5" font-family="Liberation Serif" text-anchor="middle">Low Library</text><text x="756" y="356" fill="#fff" font-size="5.5" font-family="Liberation Serif" text-anchor="middle">St. Paul's Chapel</text><text x="533" y="399" fill="#fff" font-size="5" font-family="Liberation Serif" text-anchor="middle">Lewisohn</text><text x="724" y="394" fill="#fff" font-size="5.5" font-family="Liberation Serif" text-anchor="middle">Buell</text><text x="783" y="399" fill="#fff" font-size="5" font-family="Liberation Serif" text-anchor="middle">Philosophy</text><text x="658" y="415" fill="#fff" font-size="5.5" font-family="Liberation Serif" text-anchor="middle">Alma Mater</text><text x="558" y="447" fill="#fff" font-size="6" font-family="Liberation Serif" text-anchor="middle">Dodge</text><text x="756" y="447" fill="#fff" font-size="6" font-family="Liberation Serif" text-anchor="middle">East</text><text x="559" y="503" fill="#fff" font-size="5.5" font-family="Liberation Serif" text-anchor="middle">Journalism</text><text x="757" y="502" fill="#fff" font-size="5.5" font-family="Liberation Serif" text-anchor="middle">Hamilton</text><text x="534" y="545" fill="#fff" font-size="5.5" font-family="Liberation Serif" text-anchor="middle">Furnald</text><text x="785" y="545" fill="#fff" font-size="5.5" font-family="Liberation Serif" text-anchor="middle">Hartley</text><text x="557" y="609" fill="#fff" font-size="6" font-family="Liberation Serif" text-anchor="middle">Lerner</text><text x="785" y="600" fill="#fff" font-size="5.5" font-family="Liberation Serif" text-anchor="middle">Wallach</text><text x="559" y="644" fill="#fff" font-size="5.5" font-family="Liberation Serif" text-anchor="middle">Carman</text><text x="658" y="622" fill="#222" font-size="6" font-family="Liberation Serif" text-anchor="middle">Butler Library</text><text x="756" y="639" fill="#fff" font-size="5.5" font-family="Liberation Serif" text-anchor="middle">John Jay</text></svg></div><div style="left:485px;top:682px;width:320px;height:90px;background:#D4D0C8;box-shadow:inset -1px -1px #404040,inset 1px 1px #D4D0C8,inset -2px -2px #808080,inset 2px 2px #fff;"></div><div style="left:489px;top:686px;width:312px;height:19px;background:linear-gradient(to right,#808080,#C0C0C0)"></div><div style="left:491px;top:687px;width:16px;height:16px"><svg width="16" height="16" viewBox="0 0 16 16" shape-rendering="crispEdges"><rect width="16" height="16" fill="#fff"/><path d="M6 0h1v1h-1zM8 0h1v1h-1zM9 0h1v1h-1zM12 0h1v1h-1zM5 1h1v1h-1zM11 1h1v1h-1zM4 2h1v1h-1zM7 2h1v1h-1zM9 2h1v1h-1zM11 2h1v1h-1zM5 3h1v1h-1zM7 3h1v1h-1zM11 3h1v1h-1zM6 4h1v1h-1zM8 4h1v1h-1zM10 4h1v1h-1zM5 6h1v1h-1zM8 6h1v1h-1z" fill="#f00"/><path d="M3 5h1v1h-1zM4 5h1v1h-1zM5 5h1v1h-1zM6 5h1v1h-1zM7 5h1v1h-1zM8 5h1v1h-1zM9 5h1v1h-1zM10 5h1v1h-1zM12 5h1v1h-1zM13 5h1v1h-1zM14 5h1v1h-1zM2 6h1v1h-1zM4 6h1v1h-1zM11 6h1v1h-1zM15 6h1v1h-1zM2 7h1v1h-1zM5 7h1v1h-1zM6 7h1v1h-1zM7 7h1v1h-1zM8 7h1v1h-1zM9 7h1v1h-1zM10 7h1v1h-1zM12 7h1v1h-1zM15 7h1v1h-1zM2 8h1v1h-1zM3 8h1v1h-1zM11 8h1v1h-1zM14 8h1v1h-1zM3 9h1v1h-1zM5 9h1v1h-1zM7 9h1v1h-1zM8 9h1v1h-1zM10 9h1v1h-1zM13 9h1v1h-1zM3 10h1v1h-1zM11 10h1v1h-1zM12 10h1v1h-1zM4 11h1v1h-1zM12 11h1v1h-1zM13 11h1v1h-1zM2 12h1v1h-1zM5 12h1v1h-1zM6 12h1v1h-1zM7 12h1v1h-1zM8 12h1v1h-1zM9 12h1v1h-1zM10 12h1v1h-1zM11 12h1v1h-1zM14 12h1v1h-1zM2 13h1v1h-1zM13 13h1v1h-1zM3 14h1v1h-1zM4 14h1v1h-1zM5 14h1v1h-1zM11 14h1v1h-1zM12 14h1v1h-1zM6 15h1v1h-1zM7 15h1v1h-1zM8 15h1v1h-1zM9 15h1v1h-1zM10 15h1v1h-1z" fill="#00008B"/></svg></div><div style="left:510px;top:690.69px;height:11px;font:bold 11px/11px 'Liberation Sans', sans-serif;color:#D4D0C8;white-space:pre;letter-spacing:0.21px">BubbleGuy Controller</div><div style="left:783px;top:688px;width:16px;height:15px;background:#D4D0C8;box-shadow:inset -1px -1px #404040,inset 1px 1px #fff,inset -2px -2px #808080;"><svg style="position:absolute;left:3px;top:3px" width="8" height="8" shape-rendering="crispEdges"><path d="M0 0h1v1h-1zM1 0h1v1h-1zM6 0h1v1h-1zM7 0h1v1h-1zM0 1h1v1h-1zM1 1h1v1h-1zM2 1h1v1h-1zM5 1h1v1h-1zM6 1h1v1h-1zM7 1h1v1h-1zM1 2h1v1h-1zM2 2h1v1h-1zM3 2h1v1h-1zM4 2h1v1h-1zM5 2h1v1h-1zM6 2h1v1h-1zM2 3h1v1h-1zM3 3h1v1h-1zM4 3h1v1h-1zM5 3h1v1h-1zM2 4h1v1h-1zM3 4h1v1h-1zM4 4h1v1h-1zM5 4h1v1h-1zM1 5h1v1h-1zM2 5h1v1h-1zM3 5h1v1h-1zM4 5h1v1h-1zM5 5h1v1h-1zM6 5h1v1h-1zM0 6h1v1h-1zM1 6h1v1h-1zM2 6h1v1h-1zM5 6h1v1h-1zM6 6h1v1h-1zM7 6h1v1h-1zM0 7h1v1h-1zM1 7h1v1h-1zM6 7h1v1h-1zM7 7h1v1h-1z" fill="#000"/></svg></div><div style="left:489px;top:706px;width:312px;height:62px;background:#CCCCCC"></div><div style="left:489px;top:715px;width:13px;height:13px;"><div style="left:1px;top:1px;width:12px;height:12px;border:1px solid #fff"></div><div style="left:0;top:0;width:12px;height:12px;border:1px solid #666"></div></div><div style="left:506px;top:715.84px;font:bold 12px/12px 'Liberation Sans', sans-serif;color:#000;white-space:pre;text-shadow:0 0 0.3px;letter-spacing:-0.15px">Bubble Guy</div><div style="left:645px;top:715px;width:13px;height:13px;"><div style="left:1px;top:1px;width:12px;height:12px;border:1px solid #fff"></div><div style="left:0;top:0;width:12px;height:12px;border:1px solid #666"></div><svg style="position:absolute;left:0;top:0" width="13" height="13" shape-rendering="crispEdges"><path d="M3 5h2v5H3zM9 3h1v2H9zM8 4h1v2H8zM7 5h1v2H7zM6 6h1v2H6zM5 7h1v2H5z" fill="#000"/></svg></div><div style="left:662px;top:715.84px;font:bold 12px/12px 'Liberation Sans', sans-serif;color:#000;white-space:pre;text-shadow:0 0 0.3px;letter-spacing:-0.15px">Show Bubble</div><div style="left:489px;top:746px;width:13px;height:13px;"><div style="left:1px;top:1px;width:12px;height:12px;border:1px solid #fff"></div><div style="left:0;top:0;width:12px;height:12px;border:1px solid #666"></div></div><div style="left:506px;top:746.84px;font:bold 12px/12px 'Liberation Sans', sans-serif;color:#000;white-space:pre;text-shadow:0 0 0.3px;letter-spacing:-0.2px">Move Away from labels</div><div style="left:486px;top:791px;width:239px;height:64px;background:#D4D0C8;box-shadow:inset -1px -1px #404040,inset 1px 1px #D4D0C8,inset -2px -2px #808080,inset 2px 2px #fff;"></div><div style="left:490px;top:795px;width:231px;height:19px;background:linear-gradient(to right,#808080,#C0C0C0)"></div><div style="left:492px;top:796px;width:16px;height:16px"><svg width="16" height="16" viewBox="0 0 16 16" shape-rendering="crispEdges"><rect width="16" height="16" fill="#fff"/><path d="M6 0h1v1h-1zM8 0h1v1h-1zM9 0h1v1h-1zM12 0h1v1h-1zM5 1h1v1h-1zM11 1h1v1h-1zM4 2h1v1h-1zM7 2h1v1h-1zM9 2h1v1h-1zM11 2h1v1h-1zM5 3h1v1h-1zM7 3h1v1h-1zM11 3h1v1h-1zM6 4h1v1h-1zM8 4h1v1h-1zM10 4h1v1h-1zM5 6h1v1h-1zM8 6h1v1h-1z" fill="#f00"/><path d="M3 5h1v1h-1zM4 5h1v1h-1zM5 5h1v1h-1zM6 5h1v1h-1zM7 5h1v1h-1zM8 5h1v1h-1zM9 5h1v1h-1zM10 5h1v1h-1zM12 5h1v1h-1zM13 5h1v1h-1zM14 5h1v1h-1zM2 6h1v1h-1zM4 6h1v1h-1zM11 6h1v1h-1zM15 6h1v1h-1zM2 7h1v1h-1zM5 7h1v1h-1zM6 7h1v1h-1zM7 7h1v1h-1zM8 7h1v1h-1zM9 7h1v1h-1zM10 7h1v1h-1zM12 7h1v1h-1zM15 7h1v1h-1zM2 8h1v1h-1zM3 8h1v1h-1zM11 8h1v1h-1zM14 8h1v1h-1zM3 9h1v1h-1zM5 9h1v1h-1zM7 9h1v1h-1zM8 9h1v1h-1zM10 9h1v1h-1zM13 9h1v1h-1zM3 10h1v1h-1zM11 10h1v1h-1zM12 10h1v1h-1zM4 11h1v1h-1zM12 11h1v1h-1zM13 11h1v1h-1zM2 12h1v1h-1zM5 12h1v1h-1zM6 12h1v1h-1zM7 12h1v1h-1zM8 12h1v1h-1zM9 12h1v1h-1zM10 12h1v1h-1zM11 12h1v1h-1zM14 12h1v1h-1zM2 13h1v1h-1zM13 13h1v1h-1zM3 14h1v1h-1zM4 14h1v1h-1zM5 14h1v1h-1zM11 14h1v1h-1zM12 14h1v1h-1zM6 15h1v1h-1zM7 15h1v1h-1zM8 15h1v1h-1zM9 15h1v1h-1zM10 15h1v1h-1z" fill="#00008B"/></svg></div><div style="left:511px;top:799.69px;height:11px;font:bold 11px/11px 'Liberation Sans', sans-serif;color:#D4D0C8;white-space:pre;letter-spacing:0.3px">Mouse Behavior Controller</div><div style="left:703px;top:797px;width:16px;height:15px;background:#D4D0C8;box-shadow:inset -1px -1px #404040,inset 1px 1px #fff,inset -2px -2px #808080;"><svg style="position:absolute;left:3px;top:3px" width="8" height="8" shape-rendering="crispEdges"><path d="M0 0h1v1h-1zM1 0h1v1h-1zM6 0h1v1h-1zM7 0h1v1h-1zM0 1h1v1h-1zM1 1h1v1h-1zM2 1h1v1h-1zM5 1h1v1h-1zM6 1h1v1h-1zM7 1h1v1h-1zM1 2h1v1h-1zM2 2h1v1h-1zM3 2h1v1h-1zM4 2h1v1h-1zM5 2h1v1h-1zM6 2h1v1h-1zM2 3h1v1h-1zM3 3h1v1h-1zM4 3h1v1h-1zM5 3h1v1h-1zM2 4h1v1h-1zM3 4h1v1h-1zM4 4h1v1h-1zM5 4h1v1h-1zM1 5h1v1h-1zM2 5h1v1h-1zM3 5h1v1h-1zM4 5h1v1h-1zM5 5h1v1h-1zM6 5h1v1h-1zM0 6h1v1h-1zM1 6h1v1h-1zM2 6h1v1h-1zM5 6h1v1h-1zM6 6h1v1h-1zM7 6h1v1h-1zM0 7h1v1h-1zM1 7h1v1h-1zM6 7h1v1h-1zM7 7h1v1h-1z" fill="#000"/></svg></div><div style="left:490px;top:815px;width:231px;height:36px;background:#CCCCCC"></div><div style="left:490px;top:827px;width:13px;height:13px;"><div style="left:1px;top:1px;width:12px;height:12px;border:1px solid #fff"></div><div style="left:0;top:0;width:12px;height:12px;border:1px solid #666"></div></div><div style="left:507px;top:827.84px;font:bold 12px/12px 'Liberation Sans', sans-serif;color:#000;white-space:pre;text-shadow:0 0 0.3px;">On</div><div style="left:853px;top:52px;width:396px;height:723px;background:#D4D0C8;box-shadow:inset -1px -1px #404040,inset 1px 1px #D4D0C8,inset -2px -2px #808080,inset 2px 2px #fff;"></div><div style="left:857px;top:56px;width:388px;height:19px;background:linear-gradient(to right,#808080,#C0C0C0)"></div><div style="left:859px;top:57px;width:16px;height:16px"><svg width="16" height="16" viewBox="0 0 16 16" shape-rendering="crispEdges"><rect width="16" height="16" fill="#fff"/><path d="M6 0h1v1h-1zM8 0h1v1h-1zM9 0h1v1h-1zM12 0h1v1h-1zM5 1h1v1h-1zM11 1h1v1h-1zM4 2h1v1h-1zM7 2h1v1h-1zM9 2h1v1h-1zM11 2h1v1h-1zM5 3h1v1h-1zM7 3h1v1h-1zM11 3h1v1h-1zM6 4h1v1h-1zM8 4h1v1h-1zM10 4h1v1h-1zM5 6h1v1h-1zM8 6h1v1h-1z" fill="#f00"/><path d="M3 5h1v1h-1zM4 5h1v1h-1zM5 5h1v1h-1zM6 5h1v1h-1zM7 5h1v1h-1zM8 5h1v1h-1zM9 5h1v1h-1zM10 5h1v1h-1zM12 5h1v1h-1zM13 5h1v1h-1zM14 5h1v1h-1zM2 6h1v1h-1zM4 6h1v1h-1zM11 6h1v1h-1zM15 6h1v1h-1zM2 7h1v1h-1zM5 7h1v1h-1zM6 7h1v1h-1zM7 7h1v1h-1zM8 7h1v1h-1zM9 7h1v1h-1zM10 7h1v1h-1zM12 7h1v1h-1zM15 7h1v1h-1zM2 8h1v1h-1zM3 8h1v1h-1zM11 8h1v1h-1zM14 8h1v1h-1zM3 9h1v1h-1zM5 9h1v1h-1zM7 9h1v1h-1zM8 9h1v1h-1zM10 9h1v1h-1zM13 9h1v1h-1zM3 10h1v1h-1zM11 10h1v1h-1zM12 10h1v1h-1zM4 11h1v1h-1zM12 11h1v1h-1zM13 11h1v1h-1zM2 12h1v1h-1zM5 12h1v1h-1zM6 12h1v1h-1zM7 12h1v1h-1zM8 12h1v1h-1zM9 12h1v1h-1zM10 12h1v1h-1zM11 12h1v1h-1zM14 12h1v1h-1zM2 13h1v1h-1zM13 13h1v1h-1zM3 14h1v1h-1zM4 14h1v1h-1zM5 14h1v1h-1zM11 14h1v1h-1zM12 14h1v1h-1zM6 15h1v1h-1zM7 15h1v1h-1zM8 15h1v1h-1zM9 15h1v1h-1zM10 15h1v1h-1z" fill="#00008B"/></svg></div><div style="left:878px;top:60.69px;height:11px;font:bold 11px/11px 'Liberation Sans', sans-serif;color:#D4D0C8;white-space:pre;letter-spacing:0.56px">Label/Annotation Parameters</div><div style="left:1227px;top:58px;width:16px;height:15px;background:#D4D0C8;box-shadow:inset -1px -1px #404040,inset 1px 1px #fff,inset -2px -2px #808080;"><svg style="position:absolute;left:3px;top:3px" width="8" height="8" shape-rendering="crispEdges"><path d="M0 0h1v1h-1zM1 0h1v1h-1zM6 0h1v1h-1zM7 0h1v1h-1zM0 1h1v1h-1zM1 1h1v1h-1zM2 1h1v1h-1zM5 1h1v1h-1zM6 1h1v1h-1zM7 1h1v1h-1zM1 2h1v1h-1zM2 2h1v1h-1zM3 2h1v1h-1zM4 2h1v1h-1zM5 2h1v1h-1zM6 2h1v1h-1zM2 3h1v1h-1zM3 3h1v1h-1zM4 3h1v1h-1zM5 3h1v1h-1zM2 4h1v1h-1zM3 4h1v1h-1zM4 4h1v1h-1zM5 4h1v1h-1zM1 5h1v1h-1zM2 5h1v1h-1zM3 5h1v1h-1zM4 5h1v1h-1zM5 5h1v1h-1zM6 5h1v1h-1zM0 6h1v1h-1zM1 6h1v1h-1zM2 6h1v1h-1zM5 6h1v1h-1zM6 6h1v1h-1zM7 6h1v1h-1zM0 7h1v1h-1zM1 7h1v1h-1zM6 7h1v1h-1zM7 7h1v1h-1z" fill="#000"/></svg></div><div style="left:857px;top:76px;width:388px;height:695px;background:#CCCCCC"></div><div style="left:857px;top:77.15px;width:388px;text-align:center;font:bold 14px/14px 'Liberation Sans', sans-serif;color:#666699;white-space:pre;text-shadow:0 0 0.3px;letter-spacing:0.2px">Inside Label's Parameters</div><div style="left:857px;top:99px;width:13px;height:13px;"><div style="left:1px;top:1px;width:12px;height:12px;border:1px solid #fff"></div><div style="left:0;top:0;width:12px;height:12px;border:1px solid #666"></div></div><div style="left:874px;top:99.84px;font:bold 12px/12px 'Liberation Sans', sans-serif;color:#000;white-space:pre;text-shadow:0 0 0.3px;letter-spacing:-0.07px">Closest to previous frame placement relative to projected object</div><div style="left:857px;top:124px;width:13px;height:13px;"><div style="left:1px;top:1px;width:12px;height:12px;border:1px solid #fff"></div><div style="left:0;top:0;width:12px;height:12px;border:1px solid #666"></div></div><div style="left:874px;top:124.84px;font:bold 12px/12px 'Liberation Sans', sans-serif;color:#000;white-space:pre;text-shadow:0 0 0.3px;letter-spacing:-0.07px">Always pick best placement closest to projected object</div><div style="left:857px;top:149px;width:13px;height:13px;"><div style="left:1px;top:1px;width:12px;height:12px;border:1px solid #fff"></div><div style="left:0;top:0;width:12px;height:12px;border:1px solid #666"></div><svg style="position:absolute;left:0;top:0" width="13" height="13" shape-rendering="crispEdges"><path d="M3 5h2v5H3zM9 3h1v2H9zM8 4h1v2H8zM7 5h1v2H7zM6 6h1v2H6zM5 7h1v2H5z" fill="#000"/></svg></div><div style="left:874px;top:149.84px;font:bold 12px/12px 'Liberation Sans', sans-serif;color:#000;white-space:pre;text-shadow:0 0 0.3px;letter-spacing:-0.07px">Hybrid</div><div style="left:857px;top:170.84px;font:bold 12px/12px 'Liberation Sans', sans-serif;color:#666699;white-space:pre;text-shadow:0 0 0.3px;letter-spacing:-0.1px"># of frames label can be displayed below minimum size</div><div style="left:857px;top:187.84px;font:bold 12px/12px 'Liberation Sans', sans-serif;color:#666699;white-space:pre;text-shadow:0 0 0.3px;letter-spacing:-0.1px">Number of frames to wait until label can move out of current position</div><div style="left:857px;top:209.15px;width:388px;text-align:center;font:bold 14px/14px 'Liberation Sans', sans-serif;color:#666699;white-space:pre;text-shadow:0 0 0.3px;letter-spacing:0.2px">Outside Label's Parameters</div><div style="left:857px;top:225.69px;width:388px;text-align:center;font:normal 11px/11px 'Liberation Sans', sans-serif;color:#666699;white-space:pre;">Outside Label's Arrow Parameters</div><div style="left:857px;top:244px;width:13px;height:13px;"><div style="left:1px;top:1px;width:12px;height:12px;border:1px solid #fff"></div><div style="left:0;top:0;width:12px;height:12px;border:1px solid #666"></div></div><div style="left:874px;top:244.84px;font:bold 12px/12px 'Liberation Sans', sans-serif;color:#000;white-space:pre;text-shadow:0 0 0.3px;letter-spacing:-0.07px">Always picks best/largest area to point to</div><div style="left:857px;top:269px;width:13px;height:13px;"><div style="left:1px;top:1px;width:12px;height:12px;border:1px solid #fff"></div><div style="left:0;top:0;width:12px;height:12px;border:1px solid #666"></div><svg style="position:absolute;left:0;top:0" width="13" height="13" shape-rendering="crispEdges"><path d="M3 5h2v5H3zM9 3h1v2H9zM8 4h1v2H8zM7 5h1v2H7zM6 6h1v2H6zM5 7h1v2H5z" fill="#000"/></svg></div><div style="left:874px;top:269.84px;font:bold 12px/12px 'Liberation Sans', sans-serif;color:#000;white-space:pre;text-shadow:0 0 0.3px;letter-spacing:-0.07px">Always picks area from last frame</div><div style="left:857px;top:294px;width:13px;height:13px;"><div style="left:1px;top:1px;width:12px;height:12px;border:1px solid #fff"></div><div style="left:0;top:0;width:12px;height:12px;border:1px solid #666"></div></div><div style="left:874px;top:294.84px;font:bold 12px/12px 'Liberation Sans', sans-serif;color:#000;white-space:pre;text-shadow:0 0 0.3px;letter-spacing:-0.07px">Hybrid Arrow placement policy</div><div style="left:857px;top:315.84px;font:bold 12px/12px 'Liberation Sans', sans-serif;color:#666699;white-space:pre;text-shadow:0 0 0.3px;letter-spacing:-0.1px">Minimum Size of area arrow is pointing</div><div style="left:864px;top:334px;width:374px;height:7px;background:#fff"></div><div style="left:864px;top:334px;width:373px;height:6px;background:#CCCCCC;border:1px solid #666;box-shadow:inset 0 1px #999"></div><div style="left:917px;top:330px;width:15px;height:16px"><svg width="15" height="16" shape-rendering="crispEdges"><path d="M1 1h13v8l-7 7l-7-7z" fill="#CCCCCC"/>
<path d="M1 1h13v1H1zM1 1h1v8H1z" fill="#fff"/>
<path d="M1 0h13v1H1zM0 1h1v8H0zM14 1h1v8h-1zM1 9h1v1H1zM2 10h1v1H2zM3 11h1v1H3zM4 12h1v1H4zM5 13h1v1H5zM6 14h1v1H6zM7 15h1v1H7zM13 9h1v1h-1zM12 10h1v1h-1zM11 11h1v1h-1zM10 12h1v1h-1zM9 13h1v1H9zM8 14h1v1H8z" fill="#000"/>
<path d="M2 2h1v1H2zM6 2h1v1H6zM10 2h1v1h-1zM4 4h1v1H4zM8 4h1v1H8zM2 6h1v1H2zM6 6h1v1H6zM10 6h1v1h-1z" fill="#fff"/>
<path d="M3 3h1v1H3zM7 3h1v1H7zM11 3h1v1h-1zM5 5h1v1H5zM9 5h1v1H9zM3 7h1v1H3zM7 7h1v1H7zM11 7h1v1h-1z" fill="#000"/></svg></div><div style="left:864px;top:350px;width:1px;height:6px;background:#9999CC"></div><div style="left:879px;top:350px;width:1px;height:6px;background:#9999CC"></div><div style="left:894px;top:350px;width:1px;height:6px;background:#9999CC"></div><div style="left:909px;top:350px;width:1px;height:6px;background:#9999CC"></div><div style="left:924px;top:350px;width:1px;height:6px;background:#9999CC"></div><div style="left:939px;top:350px;width:1px;height:6px;background:#9999CC"></div><div style="left:954px;top:350px;width:1px;height:6px;background:#9999CC"></div><div style="left:969px;top:350px;width:1px;height:6px;background:#9999CC"></div><div style="left:984px;top:350px;width:1px;height:6px;background:#9999CC"></div><div style="left:998px;top:350px;width:1px;height:6px;background:#9999CC"></div><div style="left:1013px;top:350px;width:1px;height:6px;background:#9999CC"></div><div style="left:1028px;top:350px;width:1px;height:6px;background:#9999CC"></div><div style="left:1043px;top:350px;width:1px;height:6px;background:#9999CC"></div><div style="left:1058px;top:350px;width:1px;height:6px;background:#9999CC"></div><div style="left:1073px;top:350px;width:1px;height:6px;background:#9999CC"></div><div style="left:1088px;top:350px;width:1px;height:6px;background:#9999CC"></div><div style="left:1103px;top:350px;width:1px;height:6px;background:#9999CC"></div><div style="left:1118px;top:350px;width:1px;height:6px;background:#9999CC"></div><div style="left:1133px;top:350px;width:1px;height:6px;background:#9999CC"></div><div style="left:1148px;top:350px;width:1px;height:6px;background:#9999CC"></div><div style="left:1163px;top:350px;width:1px;height:6px;background:#9999CC"></div><div style="left:1178px;top:350px;width:1px;height:6px;background:#9999CC"></div><div style="left:1193px;top:350px;width:1px;height:6px;background:#9999CC"></div><div style="left:1208px;top:350px;width:1px;height:6px;background:#9999CC"></div><div style="left:1223px;top:350px;width:1px;height:6px;background:#9999CC"></div><div style="left:1238px;top:350px;width:1px;height:6px;background:#9999CC"></div><div style="left:844.0px;top:359.84px;width:40px;text-align:center;font:bold 12px/12px 'Liberation Sans', sans-serif;color:#666699;white-space:pre;text-shadow:0 0 0.3px">0</div><div style="left:858.9px;top:359.84px;width:40px;text-align:center;font:bold 12px/12px 'Liberation Sans', sans-serif;color:#666699;white-space:pre;text-shadow:0 0 0.3px">1</div><div style="left:873.9px;top:359.84px;width:40px;text-align:center;font:bold 12px/12px 'Liberation Sans', sans-serif;color:#666699;white-space:pre;text-shadow:0 0 0.3px">2</div><div style="left:888.8px;top:359.84px;width:40px;text-align:center;font:bold 12px/12px 'Liberation Sans', sans-serif;color:#666699;white-space:pre;text-shadow:0 0 0.3px">3</div><div style="left:903.8px;top:359.84px;width:40px;text-align:center;font:bold 12px/12px 'Liberation Sans', sans-serif;color:#666699;white-space:pre;text-shadow:0 0 0.3px">4</div><div style="left:918.7px;top:359.84px;width:40px;text-align:center;font:bold 12px/12px 'Liberation Sans', sans-serif;color:#666699;white-space:pre;text-shadow:0 0 0.3px">5</div><div style="left:933.6px;top:359.84px;width:40px;text-align:center;font:bold 12px/12px 'Liberation Sans', sans-serif;color:#666699;white-space:pre;text-shadow:0 0 0.3px">6</div><div style="left:948.6px;top:359.84px;width:40px;text-align:center;font:bold 12px/12px 'Liberation Sans', sans-serif;color:#666699;white-space:pre;text-shadow:0 0 0.3px">7</div><div style="left:963.5px;top:359.84px;width:40px;text-align:center;font:bold 12px/12px 'Liberation Sans', sans-serif;color:#666699;white-space:pre;text-shadow:0 0 0.3px">8</div><div style="left:978.5px;top:359.84px;width:40px;text-align:center;font:bold 12px/12px 'Liberation Sans', sans-serif;color:#666699;white-space:pre;text-shadow:0 0 0.3px">9</div><div style="left:993.4px;top:359.84px;width:40px;text-align:center;font:bold 12px/12px 'Liberation Sans', sans-serif;color:#666699;white-space:pre;text-shadow:0 0 0.3px">10</div><div style="left:1008.3px;top:359.84px;width:40px;text-align:center;font:bold 12px/12px 'Liberation Sans', sans-serif;color:#666699;white-space:pre;text-shadow:0 0 0.3px">11</div><div style="left:1023.3px;top:359.84px;width:40px;text-align:center;font:bold 12px/12px 'Liberation Sans', sans-serif;color:#666699;white-space:pre;text-shadow:0 0 0.3px">12</div><div style="left:1038.2px;top:359.84px;width:40px;text-align:center;font:bold 12px/12px 'Liberation Sans', sans-serif;color:#666699;white-space:pre;text-shadow:0 0 0.3px">13</div><div style="left:1053.2px;top:359.84px;width:40px;text-align:center;font:bold 12px/12px 'Liberation Sans', sans-serif;color:#666699;white-space:pre;text-shadow:0 0 0.3px">14</div><div style="left:1068.1px;top:359.84px;width:40px;text-align:center;font:bold 12px/12px 'Liberation Sans', sans-serif;color:#666699;white-space:pre;text-shadow:0 0 0.3px">15</div><div style="left:1083.0px;top:359.84px;width:40px;text-align:center;font:bold 12px/12px 'Liberation Sans', sans-serif;color:#666699;white-space:pre;text-shadow:0 0 0.3px">16</div><div style="left:1098.0px;top:359.84px;width:40px;text-align:center;font:bold 12px/12px 'Liberation Sans', sans-serif;color:#666699;white-space:pre;text-shadow:0 0 0.3px">17</div><div style="left:1112.9px;top:359.84px;width:40px;text-align:center;font:bold 12px/12px 'Liberation Sans', sans-serif;color:#666699;white-space:pre;text-shadow:0 0 0.3px">18</div><div style="left:1127.9px;top:359.84px;width:40px;text-align:center;font:bold 12px/12px 'Liberation Sans', sans-serif;color:#666699;white-space:pre;text-shadow:0 0 0.3px">19</div><div style="left:1142.8px;top:359.84px;width:40px;text-align:center;font:bold 12px/12px 'Liberation Sans', sans-serif;color:#666699;white-space:pre;text-shadow:0 0 0.3px">20</div><div style="left:1157.7px;top:359.84px;width:40px;text-align:center;font:bold 12px/12px 'Liberation Sans', sans-serif;color:#666699;white-space:pre;text-shadow:0 0 0.3px">21</div><div style="left:1172.7px;top:359.84px;width:40px;text-align:center;font:bold 12px/12px 'Liberation Sans', sans-serif;color:#666699;white-space:pre;text-shadow:0 0 0.3px">22</div><div style="left:1187.6px;top:359.84px;width:40px;text-align:center;font:bold 12px/12px 'Liberation Sans', sans-serif;color:#666699;white-space:pre;text-shadow:0 0 0.3px">23</div><div style="left:1202.6px;top:359.84px;width:40px;text-align:center;font:bold 12px/12px 'Liberation Sans', sans-serif;color:#666699;white-space:pre;text-shadow:0 0 0.3px">24</div><div style="left:1217.5px;top:359.84px;width:40px;text-align:center;font:bold 12px/12px 'Liberation Sans', sans-serif;color:#666699;white-space:pre;text-shadow:0 0 0.3px">25</div><div style="left:857px;top:376.84px;font:bold 12px/12px 'Liberation Sans', sans-serif;color:#666699;white-space:pre;text-shadow:0 0 0.3px;letter-spacing:-0.1px"># of frames can be below minimum size</div><div style="left:864px;top:395px;width:374px;height:7px;background:#fff"></div><div style="left:864px;top:395px;width:373px;height:6px;background:#CCCCCC;border:1px solid #666;box-shadow:inset 0 1px #999"></div><div style="left:1139px;top:391px;width:15px;height:16px"><svg width="15" height="16" shape-rendering="crispEdges"><path d="M1 1h13v8l-7 7l-7-7z" fill="#CCCCCC"/>
<path d="M1 1h13v1H1zM1 1h1v8H1z" fill="#fff"/>
<path d="M1 0h13v1H1zM0 1h1v8H0zM14 1h1v8h-1zM1 9h1v1H1zM2 10h1v1H2zM3 11h1v1H3zM4 12h1v1H4zM5 13h1v1H5zM6 14h1v1H6zM7 15h1v1H7zM13 9h1v1h-1zM12 10h1v1h-1zM11 11h1v1h-1zM10 12h1v1h-1zM9 13h1v1H9zM8 14h1v1H8z" fill="#000"/>
<path d="M2 2h1v1H2zM6 2h1v1H6zM10 2h1v1h-1zM4 4h1v1H4zM8 4h1v1H8zM2 6h1v1H2zM6 6h1v1H6zM10 6h1v1h-1z" fill="#fff"/>
<path d="M3 3h1v1H3zM7 3h1v1H7zM11 3h1v1h-1zM5 5h1v1H5zM9 5h1v1H9zM3 7h1v1H3zM7 7h1v1H7zM11 7h1v1h-1z" fill="#000"/></svg></div><div style="left:864px;top:411px;width:1px;height:6px;background:#9999CC"></div><div style="left:879px;top:411px;width:1px;height:6px;background:#9999CC"></div><div style="left:894px;top:411px;width:1px;height:6px;background:#9999CC"></div><div style="left:909px;top:411px;width:1px;height:6px;background:#9999CC"></div><div style="left:924px;top:411px;width:1px;height:6px;background:#9999CC"></div><div style="left:939px;top:411px;width:1px;height:6px;background:#9999CC"></div><div style="left:954px;top:411px;width:1px;height:6px;background:#9999CC"></div><div style="left:969px;top:411px;width:1px;height:6px;background:#9999CC"></div><div style="left:984px;top:411px;width:1px;height:6px;background:#9999CC"></div><div style="left:998px;top:411px;width:1px;height:6px;background:#9999CC"></div><div style="left:1013px;top:411px;width:1px;height:6px;background:#9999CC"></div><div style="left:1028px;top:411px;width:1px;height:6px;background:#9999CC"></div><div style="left:1043px;top:411px;width:1px;height:6px;background:#9999CC"></div><div style="left:1058px;top:411px;width:1px;height:6px;background:#9999CC"></div><div style="left:1073px;top:411px;width:1px;height:6px;background:#9999CC"></div><div style="left:1088px;top:411px;width:1px;height:6px;background:#9999CC"></div><div style="left:1103px;top:411px;width:1px;height:6px;background:#9999CC"></div><div style="left:1118px;top:411px;width:1px;height:6px;background:#9999CC"></div><div style="left:1133px;top:411px;width:1px;height:6px;background:#9999CC"></div><div style="left:1148px;top:411px;width:1px;height:6px;background:#9999CC"></div><div style="left:1163px;top:411px;width:1px;height:6px;background:#9999CC"></div><div style="left:1178px;top:411px;width:1px;height:6px;background:#9999CC"></div><div style="left:1193px;top:411px;width:1px;height:6px;background:#9999CC"></div><div style="left:1208px;top:411px;width:1px;height:6px;background:#9999CC"></div><div style="left:1223px;top:411px;width:1px;height:6px;background:#9999CC"></div><div style="left:1238px;top:411px;width:1px;height:6px;background:#9999CC"></div><div style="left:844.0px;top:420.84px;width:40px;text-align:center;font:bold 12px/12px 'Liberation Sans', sans-serif;color:#666699;white-space:pre;text-shadow:0 0 0.3px">0</div><div style="left:858.9px;top:420.84px;width:40px;text-align:center;font:bold 12px/12px 'Liberation Sans', sans-serif;color:#666699;white-space:pre;text-shadow:0 0 0.3px">1</div><div style="left:873.9px;top:420.84px;width:40px;text-align:center;font:bold 12px/12px 'Liberation Sans', sans-serif;color:#666699;white-space:pre;text-shadow:0 0 0.3px">2</div><div style="left:888.8px;top:420.84px;width:40px;text-align:center;font:bold 12px/12px 'Liberation Sans', sans-serif;color:#666699;white-space:pre;text-shadow:0 0 0.3px">3</div><div style="left:903.8px;top:420.84px;width:40px;text-align:center;font:bold 12px/12px 'Liberation Sans', sans-serif;color:#666699;white-space:pre;text-shadow:0 0 0.3px">4</div><div style="left:918.7px;top:420.84px;width:40px;text-align:center;font:bold 12px/12px 'Liberation Sans', sans-serif;color:#666699;white-space:pre;text-shadow:0 0 0.3px">5</div><div style="left:933.6px;top:420.84px;width:40px;text-align:center;font:bold 12px/12px 'Liberation Sans', sans-serif;color:#666699;white-space:pre;text-shadow:0 0 0.3px">6</div><div style="left:948.6px;top:420.84px;width:40px;text-align:center;font:bold 12px/12px 'Liberation Sans', sans-serif;color:#666699;white-space:pre;text-shadow:0 0 0.3px">7</div><div style="left:963.5px;top:420.84px;width:40px;text-align:center;font:bold 12px/12px 'Liberation Sans', sans-serif;color:#666699;white-space:pre;text-shadow:0 0 0.3px">8</div><div style="left:978.5px;top:420.84px;width:40px;text-align:center;font:bold 12px/12px 'Liberation Sans', sans-serif;color:#666699;white-space:pre;text-shadow:0 0 0.3px">9</div><div style="left:993.4px;top:420.84px;width:40px;text-align:center;font:bold 12px/12px 'Liberation Sans', sans-serif;color:#666699;white-space:pre;text-shadow:0 0 0.3px">10</div><div style="left:1008.3px;top:420.84px;width:40px;text-align:center;font:bold 12px/12px 'Liberation Sans', sans-serif;color:#666699;white-space:pre;text-shadow:0 0 0.3px">11</div><div style="left:1023.3px;top:420.84px;width:40px;text-align:center;font:bold 12px/12px 'Liberation Sans', sans-serif;color:#666699;white-space:pre;text-shadow:0 0 0.3px">12</div><div style="left:1038.2px;top:420.84px;width:40px;text-align:center;font:bold 12px/12px 'Liberation Sans', sans-serif;color:#666699;white-space:pre;text-shadow:0 0 0.3px">13</div><div style="left:1053.2px;top:420.84px;width:40px;text-align:center;font:bold 12px/12px 'Liberation Sans', sans-serif;color:#666699;white-space:pre;text-shadow:0 0 0.3px">14</div><div style="left:1068.1px;top:420.84px;width:40px;text-align:center;font:bold 12px/12px 'Liberation Sans', sans-serif;color:#666699;white-space:pre;text-shadow:0 0 0.3px">15</div><div style="left:1083.0px;top:420.84px;width:40px;text-align:center;font:bold 12px/12px 'Liberation Sans', sans-serif;color:#666699;white-space:pre;text-shadow:0 0 0.3px">16</div><div style="left:1098.0px;top:420.84px;width:40px;text-align:center;font:bold 12px/12px 'Liberation Sans', sans-serif;color:#666699;white-space:pre;text-shadow:0 0 0.3px">17</div><div style="left:1112.9px;top:420.84px;width:40px;text-align:center;font:bold 12px/12px 'Liberation Sans', sans-serif;color:#666699;white-space:pre;text-shadow:0 0 0.3px">18</div><div style="left:1127.9px;top:420.84px;width:40px;text-align:center;font:bold 12px/12px 'Liberation Sans', sans-serif;color:#666699;white-space:pre;text-shadow:0 0 0.3px">19</div><div style="left:1142.8px;top:420.84px;width:40px;text-align:center;font:bold 12px/12px 'Liberation Sans', sans-serif;color:#666699;white-space:pre;text-shadow:0 0 0.3px">20</div><div style="left:1157.7px;top:420.84px;width:40px;text-align:center;font:bold 12px/12px 'Liberation Sans', sans-serif;color:#666699;white-space:pre;text-shadow:0 0 0.3px">21</div><div style="left:1172.7px;top:420.84px;width:40px;text-align:center;font:bold 12px/12px 'Liberation Sans', sans-serif;color:#666699;white-space:pre;text-shadow:0 0 0.3px">22</div><div style="left:1187.6px;top:420.84px;width:40px;text-align:center;font:bold 12px/12px 'Liberation Sans', sans-serif;color:#666699;white-space:pre;text-shadow:0 0 0.3px">23</div><div style="left:1202.6px;top:420.84px;width:40px;text-align:center;font:bold 12px/12px 'Liberation Sans', sans-serif;color:#666699;white-space:pre;text-shadow:0 0 0.3px">24</div><div style="left:1217.5px;top:420.84px;width:40px;text-align:center;font:bold 12px/12px 'Liberation Sans', sans-serif;color:#666699;white-space:pre;text-shadow:0 0 0.3px">25</div><div style="left:857px;top:437.84px;font:bold 12px/12px 'Liberation Sans', sans-serif;color:#666699;white-space:pre;text-shadow:0 0 0.3px;letter-spacing:-0.1px">Number of Frames until arrow moves</div><div style="left:864px;top:456px;width:374px;height:7px;background:#fff"></div><div style="left:864px;top:456px;width:373px;height:6px;background:#CCCCCC;border:1px solid #666;box-shadow:inset 0 1px #999"></div><div style="left:857px;top:452px;width:15px;height:16px"><svg width="15" height="16" shape-rendering="crispEdges"><path d="M1 1h13v8l-7 7l-7-7z" fill="#CCCCCC"/>
<path d="M1 1h13v1H1zM1 1h1v8H1z" fill="#fff"/>
<path d="M1 0h13v1H1zM0 1h1v8H0zM14 1h1v8h-1zM1 9h1v1H1zM2 10h1v1H2zM3 11h1v1H3zM4 12h1v1H4zM5 13h1v1H5zM6 14h1v1H6zM7 15h1v1H7zM13 9h1v1h-1zM12 10h1v1h-1zM11 11h1v1h-1zM10 12h1v1h-1zM9 13h1v1H9zM8 14h1v1H8z" fill="#000"/>
<path d="M2 2h1v1H2zM6 2h1v1H6zM10 2h1v1h-1zM4 4h1v1H4zM8 4h1v1H8zM2 6h1v1H2zM6 6h1v1H6zM10 6h1v1h-1z" fill="#fff"/>
<path d="M3 3h1v1H3zM7 3h1v1H7zM11 3h1v1h-1zM5 5h1v1H5zM9 5h1v1H9zM3 7h1v1H3zM7 7h1v1H7zM11 7h1v1h-1z" fill="#000"/></svg></div><div style="left:864px;top:472px;width:1px;height:6px;background:#9999CC"></div><div style="left:879px;top:472px;width:1px;height:6px;background:#9999CC"></div><div style="left:894px;top:472px;width:1px;height:6px;background:#9999CC"></div><div style="left:909px;top:472px;width:1px;height:6px;background:#9999CC"></div><div style="left:924px;top:472px;width:1px;height:6px;background:#9999CC"></div><div style="left:939px;top:472px;width:1px;height:6px;background:#9999CC"></div><div style="left:954px;top:472px;width:1px;height:6px;background:#9999CC"></div><div style="left:969px;top:472px;width:1px;height:6px;background:#9999CC"></div><div style="left:984px;top:472px;width:1px;height:6px;background:#9999CC"></div><div style="left:998px;top:472px;width:1px;height:6px;background:#9999CC"></div><div style="left:1013px;top:472px;width:1px;height:6px;background:#9999CC"></div><div style="left:1028px;top:472px;width:1px;height:6px;background:#9999CC"></div><div style="left:1043px;top:472px;width:1px;height:6px;background:#9999CC"></div><div style="left:1058px;top:472px;width:1px;height:6px;background:#9999CC"></div><div style="left:1073px;top:472px;width:1px;height:6px;background:#9999CC"></div><div style="left:1088px;top:472px;width:1px;height:6px;background:#9999CC"></div><div style="left:1103px;top:472px;width:1px;height:6px;background:#9999CC"></div><div style="left:1118px;top:472px;width:1px;height:6px;background:#9999CC"></div><div style="left:1133px;top:472px;width:1px;height:6px;background:#9999CC"></div><div style="left:1148px;top:472px;width:1px;height:6px;background:#9999CC"></div><div style="left:1163px;top:472px;width:1px;height:6px;background:#9999CC"></div><div style="left:1178px;top:472px;width:1px;height:6px;background:#9999CC"></div><div style="left:1193px;top:472px;width:1px;height:6px;background:#9999CC"></div><div style="left:1208px;top:472px;width:1px;height:6px;background:#9999CC"></div><div style="left:1223px;top:472px;width:1px;height:6px;background:#9999CC"></div><div style="left:1238px;top:472px;width:1px;height:6px;background:#9999CC"></div><div style="left:844.0px;top:481.84px;width:40px;text-align:center;font:bold 12px/12px 'Liberation Sans', sans-serif;color:#666699;white-space:pre;text-shadow:0 0 0.3px">0</div><div style="left:858.9px;top:481.84px;width:40px;text-align:center;font:bold 12px/12px 'Liberation Sans', sans-serif;color:#666699;white-space:pre;text-shadow:0 0 0.3px">1</div><div style="left:873.9px;top:481.84px;width:40px;text-align:center;font:bold 12px/12px 'Liberation Sans', sans-serif;color:#666699;white-space:pre;text-shadow:0 0 0.3px">2</div><div style="left:888.8px;top:481.84px;width:40px;text-align:center;font:bold 12px/12px 'Liberation Sans', sans-serif;color:#666699;white-space:pre;text-shadow:0 0 0.3px">3</div><div style="left:903.8px;top:481.84px;width:40px;text-align:center;font:bold 12px/12px 'Liberation Sans', sans-serif;color:#666699;white-space:pre;text-shadow:0 0 0.3px">4</div><div style="left:918.7px;top:481.84px;width:40px;text-align:center;font:bold 12px/12px 'Liberation Sans', sans-serif;color:#666699;white-space:pre;text-shadow:0 0 0.3px">5</div><div style="left:933.6px;top:481.84px;width:40px;text-align:center;font:bold 12px/12px 'Liberation Sans', sans-serif;color:#666699;white-space:pre;text-shadow:0 0 0.3px">6</div><div style="left:948.6px;top:481.84px;width:40px;text-align:center;font:bold 12px/12px 'Liberation Sans', sans-serif;color:#666699;white-space:pre;text-shadow:0 0 0.3px">7</div><div style="left:963.5px;top:481.84px;width:40px;text-align:center;font:bold 12px/12px 'Liberation Sans', sans-serif;color:#666699;white-space:pre;text-shadow:0 0 0.3px">8</div><div style="left:978.5px;top:481.84px;width:40px;text-align:center;font:bold 12px/12px 'Liberation Sans', sans-serif;color:#666699;white-space:pre;text-shadow:0 0 0.3px">9</div><div style="left:993.4px;top:481.84px;width:40px;text-align:center;font:bold 12px/12px 'Liberation Sans', sans-serif;color:#666699;white-space:pre;text-shadow:0 0 0.3px">10</div><div style="left:1008.3px;top:481.84px;width:40px;text-align:center;font:bold 12px/12px 'Liberation Sans', sans-serif;color:#666699;white-space:pre;text-shadow:0 0 0.3px">11</div><div style="left:1023.3px;top:481.84px;width:40px;text-align:center;font:bold 12px/12px 'Liberation Sans', sans-serif;color:#666699;white-space:pre;text-shadow:0 0 0.3px">12</div><div style="left:1038.2px;top:481.84px;width:40px;text-align:center;font:bold 12px/12px 'Liberation Sans', sans-serif;color:#666699;white-space:pre;text-shadow:0 0 0.3px">13</div><div style="left:1053.2px;top:481.84px;width:40px;text-align:center;font:bold 12px/12px 'Liberation Sans', sans-serif;color:#666699;white-space:pre;text-shadow:0 0 0.3px">14</div><div style="left:1068.1px;top:481.84px;width:40px;text-align:center;font:bold 12px/12px 'Liberation Sans', sans-serif;color:#666699;white-space:pre;text-shadow:0 0 0.3px">15</div><div style="left:1083.0px;top:481.84px;width:40px;text-align:center;font:bold 12px/12px 'Liberation Sans', sans-serif;color:#666699;white-space:pre;text-shadow:0 0 0.3px">16</div><div style="left:1098.0px;top:481.84px;width:40px;text-align:center;font:bold 12px/12px 'Liberation Sans', sans-serif;color:#666699;white-space:pre;text-shadow:0 0 0.3px">17</div><div style="left:1112.9px;top:481.84px;width:40px;text-align:center;font:bold 12px/12px 'Liberation Sans', sans-serif;color:#666699;white-space:pre;text-shadow:0 0 0.3px">18</div><div style="left:1127.9px;top:481.84px;width:40px;text-align:center;font:bold 12px/12px 'Liberation Sans', sans-serif;color:#666699;white-space:pre;text-shadow:0 0 0.3px">19</div><div style="left:1142.8px;top:481.84px;width:40px;text-align:center;font:bold 12px/12px 'Liberation Sans', sans-serif;color:#666699;white-space:pre;text-shadow:0 0 0.3px">20</div><div style="left:1157.7px;top:481.84px;width:40px;text-align:center;font:bold 12px/12px 'Liberation Sans', sans-serif;color:#666699;white-space:pre;text-shadow:0 0 0.3px">21</div><div style="left:1172.7px;top:481.84px;width:40px;text-align:center;font:bold 12px/12px 'Liberation Sans', sans-serif;color:#666699;white-space:pre;text-shadow:0 0 0.3px">22</div><div style="left:1187.6px;top:481.84px;width:40px;text-align:center;font:bold 12px/12px 'Liberation Sans', sans-serif;color:#666699;white-space:pre;text-shadow:0 0 0.3px">23</div><div style="left:1202.6px;top:481.84px;width:40px;text-align:center;font:bold 12px/12px 'Liberation Sans', sans-serif;color:#666699;white-space:pre;text-shadow:0 0 0.3px">24</div><div style="left:1217.5px;top:481.84px;width:40px;text-align:center;font:bold 12px/12px 'Liberation Sans', sans-serif;color:#666699;white-space:pre;text-shadow:0 0 0.3px">25</div><div style="left:857px;top:498.84px;width:388px;text-align:center;font:bold 12px/12px 'Liberation Sans', sans-serif;color:#666699;white-space:pre;text-shadow:0 0 0.3px;">Outside Label's Mode</div><div style="left:857px;top:519px;width:13px;height:13px;"><div style="left:1px;top:1px;width:12px;height:12px;border:1px solid #fff"></div><div style="left:0;top:0;width:12px;height:12px;border:1px solid #666"></div><svg style="position:absolute;left:0;top:0" width="13" height="13" shape-rendering="crispEdges"><path d="M3 5h2v5H3zM9 3h1v2H9zM8 4h1v2H8zM7 5h1v2H7zM6 6h1v2H6zM5 7h1v2H5z" fill="#000"/></svg></div><div style="left:874px;top:519.84px;font:bold 12px/12px 'Liberation Sans', sans-serif;color:#000;white-space:pre;text-shadow:0 0 0.3px;letter-spacing:-0.07px">Closest to previous frame placement relative to projected object</div><div style="left:857px;top:544px;width:13px;height:13px;"><div style="left:1px;top:1px;width:12px;height:12px;border:1px solid #fff"></div><div style="left:0;top:0;width:12px;height:12px;border:1px solid #666"></div></div><div style="left:874px;top:544.84px;font:bold 12px/12px 'Liberation Sans', sans-serif;color:#000;white-space:pre;text-shadow:0 0 0.3px;letter-spacing:-0.07px">Always pick best placement closest to projected object</div><div style="left:857px;top:569px;width:13px;height:13px;"><div style="left:1px;top:1px;width:12px;height:12px;border:1px solid #fff"></div><div style="left:0;top:0;width:12px;height:12px;border:1px solid #666"></div></div><div style="left:874px;top:569.84px;font:bold 12px/12px 'Liberation Sans', sans-serif;color:#000;white-space:pre;text-shadow:0 0 0.3px;letter-spacing:-0.07px">Hybrid</div><div style="left:857px;top:590.84px;font:bold 12px/12px 'Liberation Sans', sans-serif;color:#666699;white-space:pre;text-shadow:0 0 0.3px;letter-spacing:-0.1px"># of frames label can be displayed below minimum size</div><div style="left:864px;top:609px;width:374px;height:7px;background:#fff"></div><div style="left:864px;top:609px;width:373px;height:6px;background:#CCCCCC;border:1px solid #666;box-shadow:inset 0 1px #999"></div><div style="left:867px;top:605px;width:15px;height:16px"><svg width="15" height="16" shape-rendering="crispEdges"><path d="M1 1h13v8l-7 7l-7-7z" fill="#CCCCCC"/>
<path d="M1 1h13v1H1zM1 1h1v8H1z" fill="#fff"/>
<path d="M1 0h13v1H1zM0 1h1v8H0zM14 1h1v8h-1zM1 9h1v1H1zM2 10h1v1H2zM3 11h1v1H3zM4 12h1v1H4zM5 13h1v1H5zM6 14h1v1H6zM7 15h1v1H7zM13 9h1v1h-1zM12 10h1v1h-1zM11 11h1v1h-1zM10 12h1v1h-1zM9 13h1v1H9zM8 14h1v1H8z" fill="#000"/>
<path d="M2 2h1v1H2zM6 2h1v1H6zM10 2h1v1h-1zM4 4h1v1H4zM8 4h1v1H8zM2 6h1v1H2zM6 6h1v1H6zM10 6h1v1h-1z" fill="#fff"/>
<path d="M3 3h1v1H3zM7 3h1v1H7zM11 3h1v1h-1zM5 5h1v1H5zM9 5h1v1H9zM3 7h1v1H3zM7 7h1v1H7zM11 7h1v1h-1z" fill="#000"/></svg></div><div style="left:864px;top:625px;width:1px;height:6px;background:#9999CC"></div><div style="left:879px;top:625px;width:1px;height:6px;background:#9999CC"></div><div style="left:894px;top:625px;width:1px;height:6px;background:#9999CC"></div><div style="left:909px;top:625px;width:1px;height:6px;background:#9999CC"></div><div style="left:924px;top:625px;width:1px;height:6px;background:#9999CC"></div><div style="left:939px;top:625px;width:1px;height:6px;background:#9999CC"></div><div style="left:954px;top:625px;width:1px;height:6px;background:#9999CC"></div><div style="left:969px;top:625px;width:1px;height:6px;background:#9999CC"></div><div style="left:984px;top:625px;width:1px;height:6px;background:#9999CC"></div><div style="left:998px;top:625px;width:1px;height:6px;background:#9999CC"></div><div style="left:1013px;top:625px;width:1px;height:6px;background:#9999CC"></div><div style="left:1028px;top:625px;width:1px;height:6px;background:#9999CC"></div><div style="left:1043px;top:625px;width:1px;height:6px;background:#9999CC"></div><div style="left:1058px;top:625px;width:1px;height:6px;background:#9999CC"></div><div style="left:1073px;top:625px;width:1px;height:6px;background:#9999CC"></div><div style="left:1088px;top:625px;width:1px;height:6px;background:#9999CC"></div><div style="left:1103px;top:625px;width:1px;height:6px;background:#9999CC"></div><div style="left:1118px;top:625px;width:1px;height:6px;background:#9999CC"></div><div style="left:1133px;top:625px;width:1px;height:6px;background:#9999CC"></div><div style="left:1148px;top:625px;width:1px;height:6px;background:#9999CC"></div><div style="left:1163px;top:625px;width:1px;height:6px;background:#9999CC"></div><div style="left:1178px;top:625px;width:1px;height:6px;background:#9999CC"></div><div style="left:1193px;top:625px;width:1px;height:6px;background:#9999CC"></div><div style="left:1208px;top:625px;width:1px;height:6px;background:#9999CC"></div><div style="left:1223px;top:625px;width:1px;height:6px;background:#9999CC"></div><div style="left:1238px;top:625px;width:1px;height:6px;background:#9999CC"></div><div style="left:844.0px;top:634.84px;width:40px;text-align:center;font:bold 12px/12px 'Liberation Sans', sans-serif;color:#666699;white-space:pre;text-shadow:0 0 0.3px">0</div><div style="left:858.9px;top:634.84px;width:40px;text-align:center;font:bold 12px/12px 'Liberation Sans', sans-serif;color:#666699;white-space:pre;text-shadow:0 0 0.3px">1</div><div style="left:873.9px;top:634.84px;width:40px;text-align:center;font:bold 12px/12px 'Liberation Sans', sans-serif;color:#666699;white-space:pre;text-shadow:0 0 0.3px">2</div><div style="left:888.8px;top:634.84px;width:40px;text-align:center;font:bold 12px/12px 'Liberation Sans', sans-serif;color:#666699;white-space:pre;text-shadow:0 0 0.3px">3</div><div style="left:903.8px;top:634.84px;width:40px;text-align:center;font:bold 12px/12px 'Liberation Sans', sans-serif;color:#666699;white-space:pre;text-shadow:0 0 0.3px">4</div><div style="left:918.7px;top:634.84px;width:40px;text-align:center;font:bold 12px/12px 'Liberation Sans', sans-serif;color:#666699;white-space:pre;text-shadow:0 0 0.3px">5</div><div style="left:933.6px;top:634.84px;width:40px;text-align:center;font:bold 12px/12px 'Liberation Sans', sans-serif;color:#666699;white-space:pre;text-shadow:0 0 0.3px">6</div><div style="left:948.6px;top:634.84px;width:40px;text-align:center;font:bold 12px/12px 'Liberation Sans', sans-serif;color:#666699;white-space:pre;text-shadow:0 0 0.3px">7</div><div style="left:963.5px;top:634.84px;width:40px;text-align:center;font:bold 12px/12px 'Liberation Sans', sans-serif;color:#666699;white-space:pre;text-shadow:0 0 0.3px">8</div><div style="left:978.5px;top:634.84px;width:40px;text-align:center;font:bold 12px/12px 'Liberation Sans', sans-serif;color:#666699;white-space:pre;text-shadow:0 0 0.3px">9</div><div style="left:993.4px;top:634.84px;width:40px;text-align:center;font:bold 12px/12px 'Liberation Sans', sans-serif;color:#666699;white-space:pre;text-shadow:0 0 0.3px">10</div><div style="left:1008.3px;top:634.84px;width:40px;text-align:center;font:bold 12px/12px 'Liberation Sans', sans-serif;color:#666699;white-space:pre;text-shadow:0 0 0.3px">11</div><div style="left:1023.3px;top:634.84px;width:40px;text-align:center;font:bold 12px/12px 'Liberation Sans', sans-serif;color:#666699;white-space:pre;text-shadow:0 0 0.3px">12</div><div style="left:1038.2px;top:634.84px;width:40px;text-align:center;font:bold 12px/12px 'Liberation Sans', sans-serif;color:#666699;white-space:pre;text-shadow:0 0 0.3px">13</div><div style="left:1053.2px;top:634.84px;width:40px;text-align:center;font:bold 12px/12px 'Liberation Sans', sans-serif;color:#666699;white-space:pre;text-shadow:0 0 0.3px">14</div><div style="left:1068.1px;top:634.84px;width:40px;text-align:center;font:bold 12px/12px 'Liberation Sans', sans-serif;color:#666699;white-space:pre;text-shadow:0 0 0.3px">15</div><div style="left:1083.0px;top:634.84px;width:40px;text-align:center;font:bold 12px/12px 'Liberation Sans', sans-serif;color:#666699;white-space:pre;text-shadow:0 0 0.3px">16</div><div style="left:1098.0px;top:634.84px;width:40px;text-align:center;font:bold 12px/12px 'Liberation Sans', sans-serif;color:#666699;white-space:pre;text-shadow:0 0 0.3px">17</div><div style="left:1112.9px;top:634.84px;width:40px;text-align:center;font:bold 12px/12px 'Liberation Sans', sans-serif;color:#666699;white-space:pre;text-shadow:0 0 0.3px">18</div><div style="left:1127.9px;top:634.84px;width:40px;text-align:center;font:bold 12px/12px 'Liberation Sans', sans-serif;color:#666699;white-space:pre;text-shadow:0 0 0.3px">19</div><div style="left:1142.8px;top:634.84px;width:40px;text-align:center;font:bold 12px/12px 'Liberation Sans', sans-serif;color:#666699;white-space:pre;text-shadow:0 0 0.3px">20</div><div style="left:1157.7px;top:634.84px;width:40px;text-align:center;font:bold 12px/12px 'Liberation Sans', sans-serif;color:#666699;white-space:pre;text-shadow:0 0 0.3px">21</div><div style="left:1172.7px;top:634.84px;width:40px;text-align:center;font:bold 12px/12px 'Liberation Sans', sans-serif;color:#666699;white-space:pre;text-shadow:0 0 0.3px">22</div><div style="left:1187.6px;top:634.84px;width:40px;text-align:center;font:bold 12px/12px 'Liberation Sans', sans-serif;color:#666699;white-space:pre;text-shadow:0 0 0.3px">23</div><div style="left:1202.6px;top:634.84px;width:40px;text-align:center;font:bold 12px/12px 'Liberation Sans', sans-serif;color:#666699;white-space:pre;text-shadow:0 0 0.3px">24</div><div style="left:1217.5px;top:634.84px;width:40px;text-align:center;font:bold 12px/12px 'Liberation Sans', sans-serif;color:#666699;white-space:pre;text-shadow:0 0 0.3px">25</div><div style="left:857px;top:651.84px;font:bold 12px/12px 'Liberation Sans', sans-serif;color:#666699;white-space:pre;text-shadow:0 0 0.3px;letter-spacing:-0.1px">Number of frames to wait until label can move out of current position</div><div style="left:864px;top:670px;width:374px;height:7px;background:#fff"></div><div style="left:864px;top:670px;width:373px;height:6px;background:#CCCCCC;border:1px solid #666;box-shadow:inset 0 1px #999"></div><div style="left:1200px;top:666px;width:15px;height:16px"><svg width="15" height="16" shape-rendering="crispEdges"><path d="M1 1h13v8l-7 7l-7-7z" fill="#CCCCCC"/>
<path d="M1 1h13v1H1zM1 1h1v8H1z" fill="#fff"/>
<path d="M1 0h13v1H1zM0 1h1v8H0zM14 1h1v8h-1zM1 9h1v1H1zM2 10h1v1H2zM3 11h1v1H3zM4 12h1v1H4zM5 13h1v1H5zM6 14h1v1H6zM7 15h1v1H7zM13 9h1v1h-1zM12 10h1v1h-1zM11 11h1v1h-1zM10 12h1v1h-1zM9 13h1v1H9zM8 14h1v1H8z" fill="#000"/>
<path d="M2 2h1v1H2zM6 2h1v1H6zM10 2h1v1h-1zM4 4h1v1H4zM8 4h1v1H8zM2 6h1v1H2zM6 6h1v1H6zM10 6h1v1h-1z" fill="#fff"/>
<path d="M3 3h1v1H3zM7 3h1v1H7zM11 3h1v1h-1zM5 5h1v1H5zM9 5h1v1H9zM3 7h1v1H3zM7 7h1v1H7zM11 7h1v1h-1z" fill="#000"/></svg></div><div style="left:864px;top:686px;width:1px;height:6px;background:#9999CC"></div><div style="left:879px;top:686px;width:1px;height:6px;background:#9999CC"></div><div style="left:894px;top:686px;width:1px;height:6px;background:#9999CC"></div><div style="left:909px;top:686px;width:1px;height:6px;background:#9999CC"></div><div style="left:924px;top:686px;width:1px;height:6px;background:#9999CC"></div><div style="left:939px;top:686px;width:1px;height:6px;background:#9999CC"></div><div style="left:954px;top:686px;width:1px;height:6px;background:#9999CC"></div><div style="left:969px;top:686px;width:1px;height:6px;background:#9999CC"></div><div style="left:984px;top:686px;width:1px;height:6px;background:#9999CC"></div><div style="left:998px;top:686px;width:1px;height:6px;background:#9999CC"></div><div style="left:1013px;top:686px;width:1px;height:6px;background:#9999CC"></div><div style="left:1028px;top:686px;width:1px;height:6px;background:#9999CC"></div><div style="left:1043px;top:686px;width:1px;height:6px;background:#9999CC"></div><div style="left:1058px;top:686px;width:1px;height:6px;background:#9999CC"></div><div style="left:1073px;top:686px;width:1px;height:6px;background:#9999CC"></div><div style="left:1088px;top:686px;width:1px;height:6px;background:#9999CC"></div><div style="left:1103px;top:686px;width:1px;height:6px;background:#9999CC"></div><div style="left:1118px;top:686px;width:1px;height:6px;background:#9999CC"></div><div style="left:1133px;top:686px;width:1px;height:6px;background:#9999CC"></div><div style="left:1148px;top:686px;width:1px;height:6px;background:#9999CC"></div><div style="left:1163px;top:686px;width:1px;height:6px;background:#9999CC"></div><div style="left:1178px;top:686px;width:1px;height:6px;background:#9999CC"></div><div style="left:1193px;top:686px;width:1px;height:6px;background:#9999CC"></div><div style="left:1208px;top:686px;width:1px;height:6px;background:#9999CC"></div><div style="left:1223px;top:686px;width:1px;height:6px;background:#9999CC"></div><div style="left:1238px;top:686px;width:1px;height:6px;background:#9999CC"></div><div style="left:844.0px;top:695.84px;width:40px;text-align:center;font:bold 12px/12px 'Liberation Sans', sans-serif;color:#666699;white-space:pre;text-shadow:0 0 0.3px">0</div><div style="left:858.9px;top:695.84px;width:40px;text-align:center;font:bold 12px/12px 'Liberation Sans', sans-serif;color:#666699;white-space:pre;text-shadow:0 0 0.3px">1</div><div style="left:873.9px;top:695.84px;width:40px;text-align:center;font:bold 12px/12px 'Liberation Sans', sans-serif;color:#666699;white-space:pre;text-shadow:0 0 0.3px">2</div><div style="left:888.8px;top:695.84px;width:40px;text-align:center;font:bold 12px/12px 'Liberation Sans', sans-serif;color:#666699;white-space:pre;text-shadow:0 0 0.3px">3</div><div style="left:903.8px;top:695.84px;width:40px;text-align:center;font:bold 12px/12px 'Liberation Sans', sans-serif;color:#666699;white-space:pre;text-shadow:0 0 0.3px">4</div><div style="left:918.7px;top:695.84px;width:40px;text-align:center;font:bold 12px/12px 'Liberation Sans', sans-serif;color:#666699;white-space:pre;text-shadow:0 0 0.3px">5</div><div style="left:933.6px;top:695.84px;width:40px;text-align:center;font:bold 12px/12px 'Liberation Sans', sans-serif;color:#666699;white-space:pre;text-shadow:0 0 0.3px">6</div><div style="left:948.6px;top:695.84px;width:40px;text-align:center;font:bold 12px/12px 'Liberation Sans', sans-serif;color:#666699;white-space:pre;text-shadow:0 0 0.3px">7</div><div style="left:963.5px;top:695.84px;width:40px;text-align:center;font:bold 12px/12px 'Liberation Sans', sans-serif;color:#666699;white-space:pre;text-shadow:0 0 0.3px">8</div><div style="left:978.5px;top:695.84px;width:40px;text-align:center;font:bold 12px/12px 'Liberation Sans', sans-serif;color:#666699;white-space:pre;text-shadow:0 0 0.3px">9</div><div style="left:993.4px;top:695.84px;width:40px;text-align:center;font:bold 12px/12px 'Liberation Sans', sans-serif;color:#666699;white-space:pre;text-shadow:0 0 0.3px">10</div><div style="left:1008.3px;top:695.84px;width:40px;text-align:center;font:bold 12px/12px 'Liberation Sans', sans-serif;color:#666699;white-space:pre;text-shadow:0 0 0.3px">11</div><div style="left:1023.3px;top:695.84px;width:40px;text-align:center;font:bold 12px/12px 'Liberation Sans', sans-serif;color:#666699;white-space:pre;text-shadow:0 0 0.3px">12</div><div style="left:1038.2px;top:695.84px;width:40px;text-align:center;font:bold 12px/12px 'Liberation Sans', sans-serif;color:#666699;white-space:pre;text-shadow:0 0 0.3px">13</div><div style="left:1053.2px;top:695.84px;width:40px;text-align:center;font:bold 12px/12px 'Liberation Sans', sans-serif;color:#666699;white-space:pre;text-shadow:0 0 0.3px">14</div><div style="left:1068.1px;top:695.84px;width:40px;text-align:center;font:bold 12px/12px 'Liberation Sans', sans-serif;color:#666699;white-space:pre;text-shadow:0 0 0.3px">15</div><div style="left:1083.0px;top:695.84px;width:40px;text-align:center;font:bold 12px/12px 'Liberation Sans', sans-serif;color:#666699;white-space:pre;text-shadow:0 0 0.3px">16</div><div style="left:1098.0px;top:695.84px;width:40px;text-align:center;font:bold 12px/12px 'Liberation Sans', sans-serif;color:#666699;white-space:pre;text-shadow:0 0 0.3px">17</div><div style="left:1112.9px;top:695.84px;width:40px;text-align:center;font:bold 12px/12px 'Liberation Sans', sans-serif;color:#666699;white-space:pre;text-shadow:0 0 0.3px">18</div><div style="left:1127.9px;top:695.84px;width:40px;text-align:center;font:bold 12px/12px 'Liberation Sans', sans-serif;color:#666699;white-space:pre;text-shadow:0 0 0.3px">19</div><div style="left:1142.8px;top:695.84px;width:40px;text-align:center;font:bold 12px/12px 'Liberation Sans', sans-serif;color:#666699;white-space:pre;text-shadow:0 0 0.3px">20</div><div style="left:1157.7px;top:695.84px;width:40px;text-align:center;font:bold 12px/12px 'Liberation Sans', sans-serif;color:#666699;white-space:pre;text-shadow:0 0 0.3px">21</div><div style="left:1172.7px;top:695.84px;width:40px;text-align:center;font:bold 12px/12px 'Liberation Sans', sans-serif;color:#666699;white-space:pre;text-shadow:0 0 0.3px">22</div><div style="left:1187.6px;top:695.84px;width:40px;text-align:center;font:bold 12px/12px 'Liberation Sans', sans-serif;color:#666699;white-space:pre;text-shadow:0 0 0.3px">23</div><div style="left:1202.6px;top:695.84px;width:40px;text-align:center;font:bold 12px/12px 'Liberation Sans', sans-serif;color:#666699;white-space:pre;text-shadow:0 0 0.3px">24</div><div style="left:1217.5px;top:695.84px;width:40px;text-align:center;font:bold 12px/12px 'Liberation Sans', sans-serif;color:#666699;white-space:pre;text-shadow:0 0 0.3px">25</div><div style="left:857px;top:712.84px;font:bold 12px/12px 'Liberation Sans', sans-serif;color:#666699;white-space:pre;text-shadow:0 0 0.3px;letter-spacing:-0.1px">Maximum distance a label can be from its object</div><div style="left:867px;top:731px;width:368px;height:7px;background:#fff"></div><div style="left:867px;top:731px;width:367px;height:6px;background:#CCCCCC;border:1px solid #666;box-shadow:inset 0 1px #999"></div><div style="left:943px;top:727px;width:15px;height:16px"><svg width="15" height="16" shape-rendering="crispEdges"><path d="M1 1h13v8l-7 7l-7-7z" fill="#CCCCCC"/>
<path d="M1 1h13v1H1zM1 1h1v8H1z" fill="#fff"/>
<path d="M1 0h13v1H1zM0 1h1v8H0zM14 1h1v8h-1zM1 9h1v1H1zM2 10h1v1H2zM3 11h1v1H3zM4 12h1v1H4zM5 13h1v1H5zM6 14h1v1H6zM7 15h1v1H7zM13 9h1v1h-1zM12 10h1v1h-1zM11 11h1v1h-1zM10 12h1v1h-1zM9 13h1v1H9zM8 14h1v1H8z" fill="#000"/>
<path d="M2 2h1v1H2zM6 2h1v1H6zM10 2h1v1h-1zM4 4h1v1H4zM8 4h1v1H8zM2 6h1v1H2zM6 6h1v1H6zM10 6h1v1h-1z" fill="#fff"/>
<path d="M3 3h1v1H3zM7 3h1v1H7zM11 3h1v1h-1zM5 5h1v1H5zM9 5h1v1H9zM3 7h1v1H3zM7 7h1v1H7zM11 7h1v1h-1z" fill="#000"/></svg></div><div style="left:867px;top:747px;width:1px;height:6px;background:#9999CC"></div><div style="left:898px;top:747px;width:1px;height:6px;background:#9999CC"></div><div style="left:928px;top:747px;width:1px;height:6px;background:#9999CC"></div><div style="left:959px;top:747px;width:1px;height:6px;background:#9999CC"></div><div style="left:989px;top:747px;width:1px;height:6px;background:#9999CC"></div><div style="left:1020px;top:747px;width:1px;height:6px;background:#9999CC"></div><div style="left:1050px;top:747px;width:1px;height:6px;background:#9999CC"></div><div style="left:1081px;top:747px;width:1px;height:6px;background:#9999CC"></div><div style="left:1112px;top:747px;width:1px;height:6px;background:#9999CC"></div><div style="left:1142px;top:747px;width:1px;height:6px;background:#9999CC"></div><div style="left:1173px;top:747px;width:1px;height:6px;background:#9999CC"></div><div style="left:1203px;top:747px;width:1px;height:6px;background:#9999CC"></div><div style="left:1234px;top:747px;width:1px;height:6px;background:#9999CC"></div><div style="left:847.0px;top:756.84px;width:40px;text-align:center;font:bold 12px/12px 'Liberation Sans', sans-serif;color:#666699;white-space:pre;text-shadow:0 0 0.3px">0</div><div style="left:877.6px;top:756.84px;width:40px;text-align:center;font:bold 12px/12px 'Liberation Sans', sans-serif;color:#666699;white-space:pre;text-shadow:0 0 0.3px">25</div><div style="left:908.2px;top:756.84px;width:40px;text-align:center;font:bold 12px/12px 'Liberation Sans', sans-serif;color:#666699;white-space:pre;text-shadow:0 0 0.3px">50</div><div style="left:938.8px;top:756.84px;width:40px;text-align:center;font:bold 12px/12px 'Liberation Sans', sans-serif;color:#666699;white-space:pre;text-shadow:0 0 0.3px">75</div><div style="left:969.3px;top:756.84px;width:40px;text-align:center;font:bold 12px/12px 'Liberation Sans', sans-serif;color:#666699;white-space:pre;text-shadow:0 0 0.3px">100</div><div style="left:999.9px;top:756.84px;width:40px;text-align:center;font:bold 12px/12px 'Liberation Sans', sans-serif;color:#666699;white-space:pre;text-shadow:0 0 0.3px">125</div><div style="left:1030.5px;top:756.84px;width:40px;text-align:center;font:bold 12px/12px 'Liberation Sans', sans-serif;color:#666699;white-space:pre;text-shadow:0 0 0.3px">150</div><div style="left:1061.1px;top:756.84px;width:40px;text-align:center;font:bold 12px/12px 'Liberation Sans', sans-serif;color:#666699;white-space:pre;text-shadow:0 0 0.3px">175</div><div style="left:1091.7px;top:756.84px;width:40px;text-align:center;font:bold 12px/12px 'Liberation Sans', sans-serif;color:#666699;white-space:pre;text-shadow:0 0 0.3px">200</div><div style="left:1122.2px;top:756.84px;width:40px;text-align:center;font:bold 12px/12px 'Liberation Sans', sans-serif;color:#666699;white-space:pre;text-shadow:0 0 0.3px">225</div><div style="left:1152.8px;top:756.84px;width:40px;text-align:center;font:bold 12px/12px 'Liberation Sans', sans-serif;color:#666699;white-space:pre;text-shadow:0 0 0.3px">250</div><div style="left:1183.4px;top:756.84px;width:40px;text-align:center;font:bold 12px/12px 'Liberation Sans', sans-serif;color:#666699;white-space:pre;text-shadow:0 0 0.3px">275</div><div style="left:1214.0px;top:756.84px;width:40px;text-align:center;font:bold 12px/12px 'Liberation Sans', sans-serif;color:#666699;white-space:pre;text-shadow:0 0 0.3px">300</div><div style="left:0px;top:995px;width:1280px;height:29px;background:#D4D0C8"></div><div style="left:0px;top:995px;width:1280px;height:1px;background:#D4D0C8"></div><div style="left:0px;top:996px;width:1280px;height:1px;background:#fff"></div><div style="left:2px;top:999px;width:56px;height:23px;background:#D4D0C8;box-shadow:inset -1px -1px #404040,inset 1px 1px #fff,inset -2px -2px #808080"></div><div style="left:4px;top:1000px;width:18px;height:18px"><svg width="18" height="18" shape-rendering="crispEdges"><path d="M11 3h1v1h-1zM12 3h1v1h-1zM13 3h1v1h-1zM14 3h1v1h-1zM9 4h1v1h-1zM10 4h1v1h-1zM11 4h1v1h-1zM12 4h1v1h-1zM13 4h1v1h-1zM14 4h1v1h-1zM15 4h1v1h-1zM16 4h1v1h-1zM2 5h1v1h-1zM8 5h1v1h-1zM9 5h1v1h-1zM10 5h1v1h-1zM12 5h1v1h-1zM13 5h1v1h-1zM15 5h1v1h-1zM16 5h1v1h-1zM17 5h1v1h-1zM2 6h1v1h-1zM4 6h1v1h-1zM5 6h1v1h-1zM6 6h1v1h-1zM7 6h1v1h-1zM8 6h1v1h-1zM9 6h1v1h-1zM12 6h1v1h-1zM13 6h1v1h-1zM16 6h1v1h-1zM17 6h1v1h-1zM4 7h1v1h-1zM5 7h1v1h-1zM6 7h1v1h-1zM7 7h1v1h-1zM8 7h1v1h-1zM9 7h1v1h-1zM12 7h1v1h-1zM13 7h1v1h-1zM16 7h1v1h-1zM17 7h1v1h-1zM8 8h1v1h-1zM9 8h1v1h-1zM11 8h1v1h-1zM12 8h1v1h-1zM13 8h1v1h-1zM14 8h1v1h-1zM16 8h1v1h-1zM17 8h1v1h-1zM8 9h1v1h-1zM9 9h1v1h-1zM10 9h1v1h-1zM11 9h1v1h-1zM12 9h1v1h-1zM13 9h1v1h-1zM14 9h1v1h-1zM15 9h1v1h-1zM16 9h1v1h-1zM17 9h1v1h-1zM8 10h1v1h-1zM9 10h1v1h-1zM10 10h1v1h-1zM12 10h1v1h-1zM13 10h1v1h-1zM15 10h1v1h-1zM16 10h1v1h-1zM17 10h1v1h-1zM8 11h1v1h-1zM9 11h1v1h-1zM12 11h1v1h-1zM13 11h1v1h-1zM16 11h1v1h-1zM17 11h1v1h-1zM8 12h1v1h-1zM9 12h1v1h-1zM12 12h1v1h-1zM13 12h1v1h-1zM16 12h1v1h-1zM17 12h1v1h-1zM8 13h1v1h-1zM9 13h1v1h-1zM11 13h1v1h-1zM12 13h1v1h-1zM13 13h1v1h-1zM14 13h1v1h-1zM16 13h1v1h-1zM17 13h1v1h-1zM2 14h1v1h-1zM8 14h1v1h-1zM9 14h1v1h-1zM10 14h1v1h-1zM11 14h1v1h-1zM12 14h1v1h-1zM13 14h1v1h-1zM14 14h1v1h-1zM15 14h1v1h-1zM16 14h1v1h-1zM17 14h1v1h-1zM2 15h1v1h-1zM4 15h1v1h-1zM5 15h1v1h-1zM6 15h1v1h-1zM7 15h1v1h-1zM8 15h1v1h-1zM9 15h1v1h-1zM10 15h1v1h-1zM15 15h1v1h-1zM16 15h1v1h-1zM17 15h1v1h-1zM4 16h1v1h-1zM5 16h1v1h-1zM6 16h1v1h-1zM7 16h1v1h-1zM8 16h1v1h-1zM17 16h1v1h-1z" fill="#000"/><path d="M11 5h1v1h-1zM10 6h1v1h-1zM11 6h1v1h-1zM10 7h1v1h-1zM11 7h1v1h-1zM2 8h1v1h-1zM10 8h1v1h-1zM2 9h1v1h-1zM4 9h1v1h-1zM5 9h1v1h-1zM6 9h1v1h-1zM7 9h1v1h-1zM4 10h1v1h-1zM5 10h1v1h-1zM6 10h1v1h-1zM7 10h1v1h-1z" fill="#f00"/><path d="M14 5h1v1h-1zM14 6h1v1h-1zM15 6h1v1h-1zM14 7h1v1h-1zM15 7h1v1h-1zM15 8h1v1h-1z" fill="#0f0"/><path d="M11 10h1v1h-1zM2 11h1v1h-1zM10 11h1v1h-1zM11 11h1v1h-1zM2 12h1v1h-1zM4 12h1v1h-1zM5 12h1v1h-1zM6 12h1v1h-1zM7 12h1v1h-1zM10 12h1v1h-1zM11 12h1v1h-1zM4 13h1v1h-1zM5 13h1v1h-1zM6 13h1v1h-1zM7 13h1v1h-1zM10 13h1v1h-1z" fill="#00f"/><path d="M14 10h1v1h-1zM14 11h1v1h-1zM15 11h1v1h-1zM14 12h1v1h-1zM15 12h1v1h-1zM15 13h1v1h-1z" fill="#ff0"/></svg></div><div style="left:25px;top:1005.69px;font:bold 11px/11px 'Liberation Sans', sans-serif;color:#000;white-space:pre;letter-spacing:0.6px;text-shadow:0 0 0.3px">Start</div><div style="left:61px;top:999px;width:1px;height:22px;background:#808080"></div><div style="left:62px;top:999px;width:1px;height:22px;background:#fff"></div><div style="left:197px;top:999px;width:1px;height:22px;background:#808080"></div><div style="left:198px;top:999px;width:1px;height:22px;background:#fff"></div><div style="left:65px;top:1000px;width:3px;height:20px;box-shadow:inset 1px 1px #fff,inset -1px -1px #808080"></div><div style="left:201px;top:1000px;width:3px;height:20px;box-shadow:inset 1px 1px #fff,inset -1px -1px #808080"></div><div style="left:75px;top:1002px;width:16px;height:16px"><svg width="16" height="16" shape-rendering="crispEdges"><rect x="0.5" y="1.5" width="15" height="13" fill="#fff" stroke="#000"/><rect x="1" y="2" width="14" height="3" fill="#0000A0"/><rect x="11" y="3" width="3" height="1" fill="#fff"/></svg></div><div style="left:98px;top:1002px;width:16px;height:16px"><svg width="16" height="16"><circle cx="8" cy="9" r="6" fill="#2A8AE0"/><path d="M4 8h8q0-3-4-3t-4 3z" fill="#A8E0FF"/><path d="M4.5 9h7" stroke="#fff" stroke-width="1.3"/><ellipse cx="8" cy="8" rx="8" ry="3" fill="none" stroke="#3090E0" stroke-width="1.2" transform="rotate(-30 8 8)"/></svg></div><div style="left:121px;top:1002px;width:16px;height:16px"><svg width="16" height="16"><rect x="2" y="4" width="13" height="9" fill="#F8F0C0" stroke="#404040"/><path d="M1 7a5 5 0 0 1 8-4" stroke="#2040E0" stroke-width="2" fill="none"/><path d="M14 11a5 5 0 0 1-8 4" stroke="#2040E0" stroke-width="2" fill="none"/><rect x="11" y="5" width="2" height="2" fill="#E00"/></svg></div><div style="left:144px;top:1002px;width:16px;height:16px"><svg width="16" height="16"><rect x="1" y="2" width="14" height="13" fill="#3070C0"/><circle cx="8" cy="9" r="6" fill="#F0E8C0"/><rect x="5" y="6" width="6" height="6" fill="#fff" stroke="#000" stroke-width="0.8"/><path d="M7 10l7-9" stroke="#E08000" stroke-width="2"/></svg></div><div style="left:167px;top:1002px;width:16px;height:16px"><svg width="16" height="16" shape-rendering="crispEdges"><rect x="0.5" y="1.5" width="15" height="13" fill="#fff" stroke="#000"/><rect x="1" y="2" width="14" height="3" fill="#0000A0"/><rect x="11" y="3" width="3" height="1" fill="#fff"/></svg></div><div style="left:207px;top:999px;width:160px;height:23px;background:#D4D0C8;box-shadow:inset -1px -1px #404040,inset 1px 1px #fff,inset -2px -2px #808080"></div><div style="left:211px;top:1002px;width:16px;height:16px"><svg width="16" height="16" shape-rendering="crispEdges"><rect x="0" y="1" width="16" height="13" fill="#000"/><rect x="0" y="1" width="16" height="2" fill="#0000A0"/><text x="1" y="11" font-size="7" fill="#fff" font-family="Liberation Mono">C:\</text></svg></div><div style="left:229px;top:1005.69px;font:normal 11px/11px 'Liberation Sans', sans-serif;color:#000;white-space:pre;letter-spacing:-0.15px">C:\WINNT\System32\cmd...</div><div style="left:370px;top:999px;width:160px;height:23px;background:#D4D0C8;box-shadow:inset -1px -1px #404040,inset 1px 1px #fff,inset -2px -2px #808080"></div><div style="left:374px;top:1002px;width:16px;height:16px"><svg width="16" height="16" shape-rendering="crispEdges"><rect x="0" y="1" width="16" height="13" fill="#000"/><rect x="0" y="1" width="16" height="2" fill="#0000A0"/><text x="1" y="11" font-size="7" fill="#fff" font-family="Liberation Mono">C:\</text></svg></div><div style="left:392px;top:1005.69px;font:normal 11px/11px 'Liberation Sans', sans-serif;color:#000;white-space:pre;letter-spacing:-0.15px">C:\WINNT\System32\cmd...</div><div style="left:533px;top:999px;width:160px;height:23px;background:#D4D0C8;box-shadow:inset -1px -1px #404040,inset 1px 1px #fff,inset -2px -2px #808080"></div><div style="left:537px;top:1002px;width:16px;height:16px"><svg width="16" height="16" shape-rendering="crispEdges"><rect x="0" y="0" width="16" height="16" fill="#A00000"/><rect x="2" y="2" width="12" height="12" fill="#404040"/><ellipse cx="8" cy="8" rx="5" ry="3" fill="#C0C0C0"/><circle cx="8" cy="8" r="2" fill="#000"/></svg></div><div style="left:555px;top:1005.69px;font:normal 11px/11px 'Liberation Sans', sans-serif;color:#000;white-space:pre;letter-spacing:-0.15px">Adobe Photoshop</div><div style="left:696px;top:999px;width:160px;height:23px;background:#D4D0C8;box-shadow:inset -1px -1px #404040,inset 1px 1px #fff,inset -2px -2px #808080"></div><div style="left:700px;top:1002px;width:16px;height:16px"><svg width="16" height="16" viewBox="0 0 16 16" shape-rendering="crispEdges"><rect width="16" height="16" fill="#fff"/><path d="M6 0h1v1h-1zM8 0h1v1h-1zM9 0h1v1h-1zM12 0h1v1h-1zM5 1h1v1h-1zM11 1h1v1h-1zM4 2h1v1h-1zM7 2h1v1h-1zM9 2h1v1h-1zM11 2h1v1h-1zM5 3h1v1h-1zM7 3h1v1h-1zM11 3h1v1h-1zM6 4h1v1h-1zM8 4h1v1h-1zM10 4h1v1h-1zM5 6h1v1h-1zM8 6h1v1h-1z" fill="#f00"/><path d="M3 5h1v1h-1zM4 5h1v1h-1zM5 5h1v1h-1zM6 5h1v1h-1zM7 5h1v1h-1zM8 5h1v1h-1zM9 5h1v1h-1zM10 5h1v1h-1zM12 5h1v1h-1zM13 5h1v1h-1zM14 5h1v1h-1zM2 6h1v1h-1zM4 6h1v1h-1zM11 6h1v1h-1zM15 6h1v1h-1zM2 7h1v1h-1zM5 7h1v1h-1zM6 7h1v1h-1zM7 7h1v1h-1zM8 7h1v1h-1zM9 7h1v1h-1zM10 7h1v1h-1zM12 7h1v1h-1zM15 7h1v1h-1zM2 8h1v1h-1zM3 8h1v1h-1zM11 8h1v1h-1zM14 8h1v1h-1zM3 9h1v1h-1zM5 9h1v1h-1zM7 9h1v1h-1zM8 9h1v1h-1zM10 9h1v1h-1zM13 9h1v1h-1zM3 10h1v1h-1zM11 10h1v1h-1zM12 10h1v1h-1zM4 11h1v1h-1zM12 11h1v1h-1zM13 11h1v1h-1zM2 12h1v1h-1zM5 12h1v1h-1zM6 12h1v1h-1zM7 12h1v1h-1zM8 12h1v1h-1zM9 12h1v1h-1zM10 12h1v1h-1zM11 12h1v1h-1zM14 12h1v1h-1zM2 13h1v1h-1zM13 13h1v1h-1zM3 14h1v1h-1zM4 14h1v1h-1zM5 14h1v1h-1zM11 14h1v1h-1zM12 14h1v1h-1zM6 15h1v1h-1zM7 15h1v1h-1zM8 15h1v1h-1zM9 15h1v1h-1zM10 15h1v1h-1z" fill="#00008B"/></svg></div><div style="left:718px;top:1005.69px;font:normal 11px/11px 'Liberation Sans', sans-serif;color:#000;white-space:pre;letter-spacing:-0.15px">RJFC Client</div><div style="left:859px;top:999px;width:160px;height:23px;background-color:#fff;background-image:linear-gradient(45deg,#D4D0C8 25%,transparent 25%,transparent 75%,#D4D0C8 75%),linear-gradient(45deg,#D4D0C8 25%,transparent 25%,transparent 75%,#D4D0C8 75%);background-size:2px 2px;background-position:0 0,1px 1px;box-shadow:inset 1px 1px #404040,inset -1px -1px #fff,inset 2px 2px #808080"></div><div style="left:864px;top:1003px;width:16px;height:16px"><svg width="16" height="16" viewBox="0 0 16 16" shape-rendering="crispEdges"><rect width="16" height="16" fill="#fff"/><path d="M6 0h1v1h-1zM8 0h1v1h-1zM9 0h1v1h-1zM12 0h1v1h-1zM5 1h1v1h-1zM11 1h1v1h-1zM4 2h1v1h-1zM7 2h1v1h-1zM9 2h1v1h-1zM11 2h1v1h-1zM5 3h1v1h-1zM7 3h1v1h-1zM11 3h1v1h-1zM6 4h1v1h-1zM8 4h1v1h-1zM10 4h1v1h-1zM5 6h1v1h-1zM8 6h1v1h-1z" fill="#f00"/><path d="M3 5h1v1h-1zM4 5h1v1h-1zM5 5h1v1h-1zM6 5h1v1h-1zM7 5h1v1h-1zM8 5h1v1h-1zM9 5h1v1h-1zM10 5h1v1h-1zM12 5h1v1h-1zM13 5h1v1h-1zM14 5h1v1h-1zM2 6h1v1h-1zM4 6h1v1h-1zM11 6h1v1h-1zM15 6h1v1h-1zM2 7h1v1h-1zM5 7h1v1h-1zM6 7h1v1h-1zM7 7h1v1h-1zM8 7h1v1h-1zM9 7h1v1h-1zM10 7h1v1h-1zM12 7h1v1h-1zM15 7h1v1h-1zM2 8h1v1h-1zM3 8h1v1h-1zM11 8h1v1h-1zM14 8h1v1h-1zM3 9h1v1h-1zM5 9h1v1h-1zM7 9h1v1h-1zM8 9h1v1h-1zM10 9h1v1h-1zM13 9h1v1h-1zM3 10h1v1h-1zM11 10h1v1h-1zM12 10h1v1h-1zM4 11h1v1h-1zM12 11h1v1h-1zM13 11h1v1h-1zM2 12h1v1h-1zM5 12h1v1h-1zM6 12h1v1h-1zM7 12h1v1h-1zM8 12h1v1h-1zM9 12h1v1h-1zM10 12h1v1h-1zM11 12h1v1h-1zM14 12h1v1h-1zM2 13h1v1h-1zM13 13h1v1h-1zM3 14h1v1h-1zM4 14h1v1h-1zM5 14h1v1h-1zM11 14h1v1h-1zM12 14h1v1h-1zM6 15h1v1h-1zM7 15h1v1h-1zM8 15h1v1h-1zM9 15h1v1h-1zM10 15h1v1h-1z" fill="#00008B"/></svg></div><div style="left:882px;top:1005.84px;font:bold 12px/12px 'Liberation Sans', sans-serif;color:#000;white-space:pre;text-shadow:0 0 0.3px;letter-spacing:-0.2px">Building Parameters</div><div style="left:1184px;top:999px;width:94px;height:23px;box-shadow:inset 1px 1px #808080,inset -1px -1px #fff"></div><div style="left:1188px;top:1001px;width:17px;height:17px;background:#000080"></div><div style="left:1188px;top:1004.69px;width:17px;text-align:center;font:normal 11px/11px 'Liberation Sans', sans-serif;color:#fff;white-space:pre;letter-spacing:-0.5px">EN</div><div style="left:1219px;top:1005.69px;font:normal 11px/11px 'Liberation Sans', sans-serif;color:#000;white-space:pre;">11:01 PM</div>
</body></html>
